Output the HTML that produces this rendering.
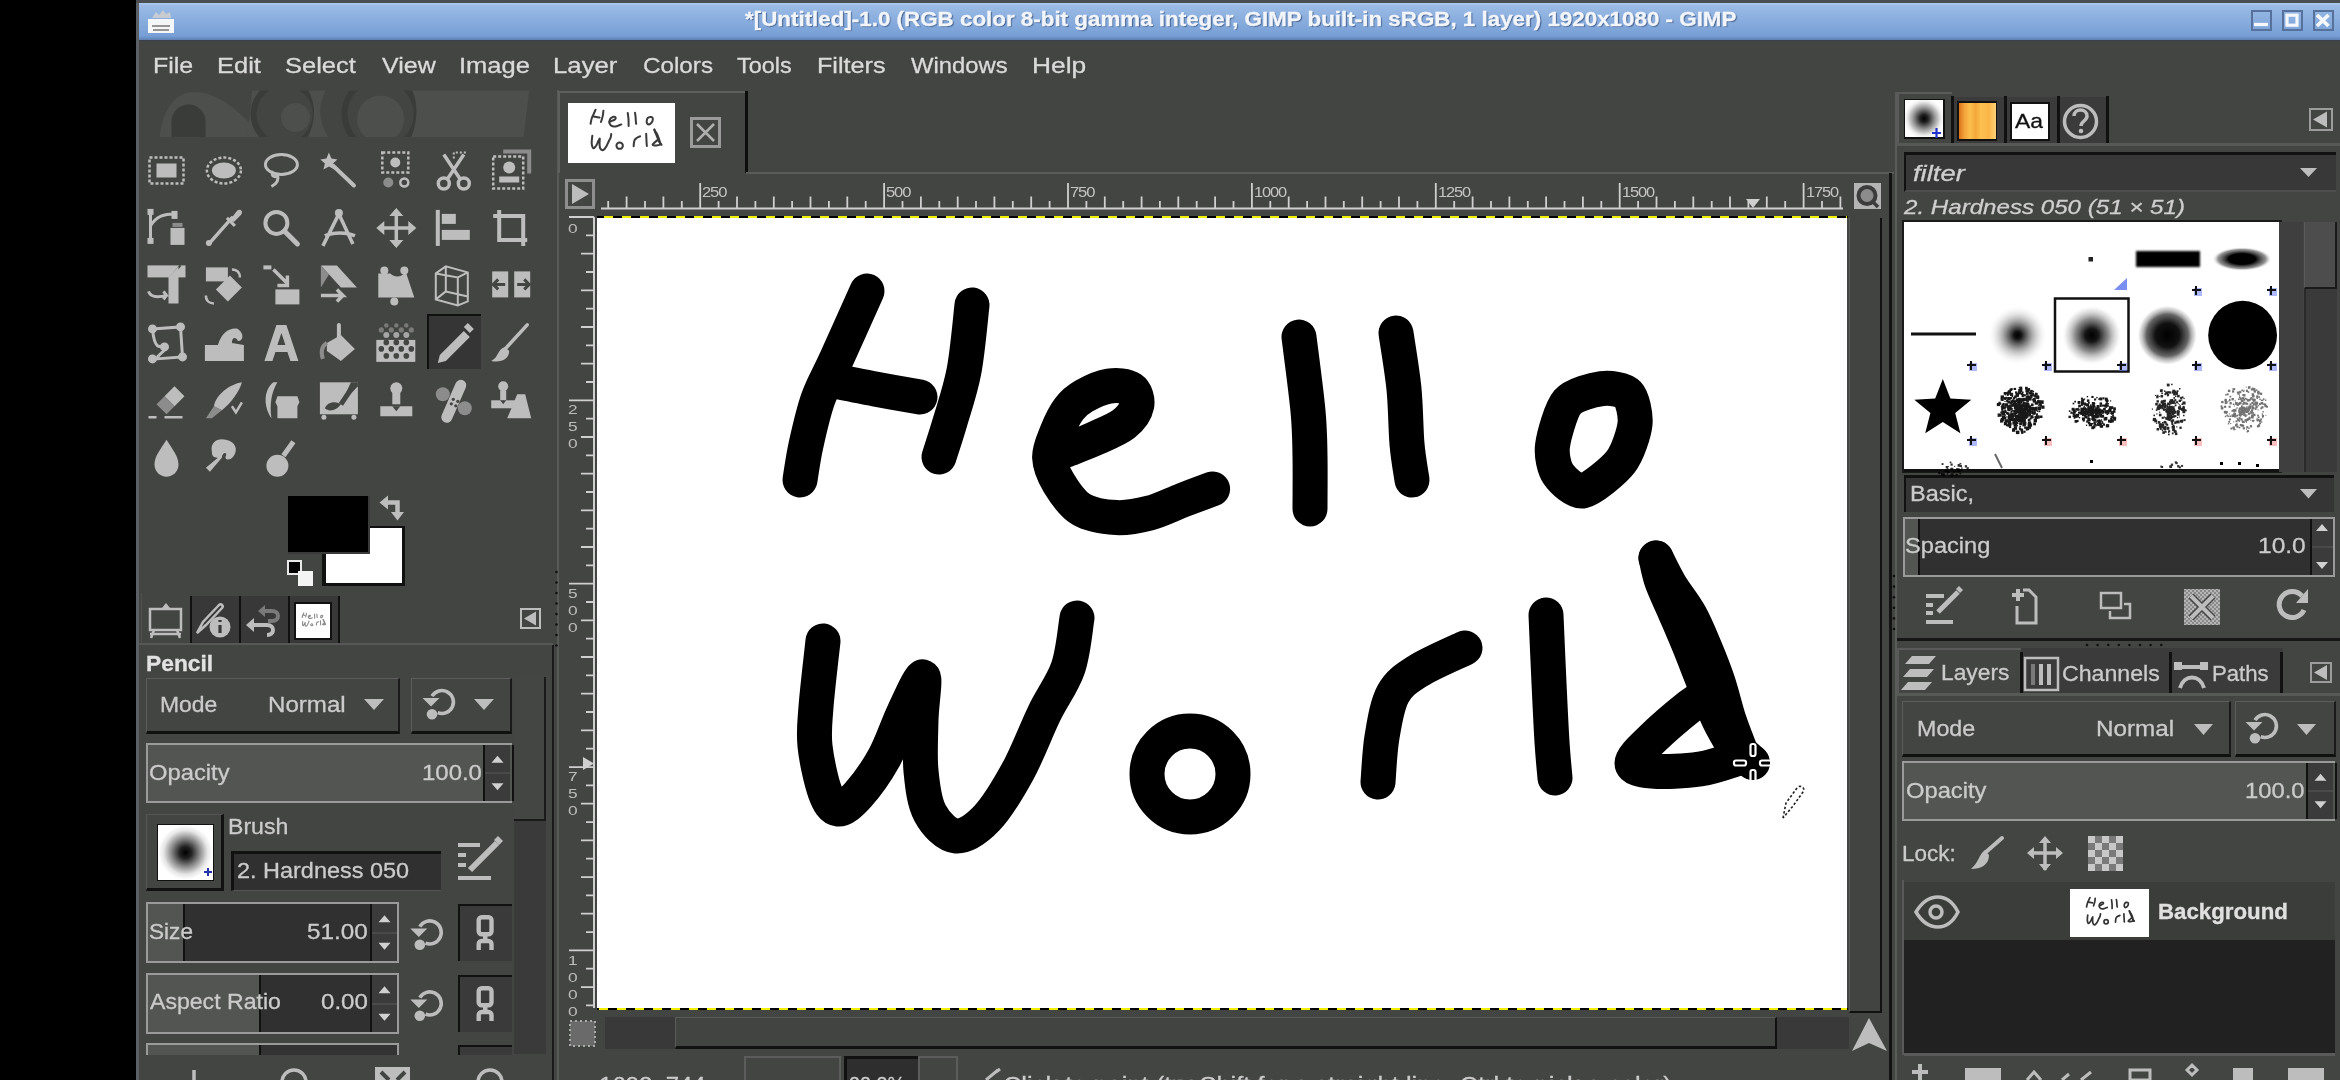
<!DOCTYPE html>
<html><head><meta charset="utf-8">
<style>
html,body{margin:0;padding:0;}
body{width:2340px;height:1080px;overflow:hidden;background:#000;position:relative;font-family:"Liberation Sans",sans-serif;}
.a{position:absolute;}
.t{position:absolute;white-space:nowrap;line-height:1;transform-origin:0 0;-webkit-text-stroke:0.3px currentColor;}
svg{position:absolute;left:0;top:0;}
</style></head><body>
<div class="a" style="left:136px;top:0px;width:2204px;height:1080px;background:#434542;"></div>
<div class="a" style="left:136px;top:0px;width:3px;height:1080px;background:#5b6066;"></div>
<div class="a" style="left:136px;top:0px;width:2204px;height:3px;background:#4b4e51;"></div>
<div class="a" style="left:139px;top:3px;width:2201px;height:37px;background:linear-gradient(#b3cdf2 0px,#9dbce6 2px,#8fb2e0 12px,#7fa5d9 26px,#779fd6 33px,#5f7fb0 37px);"></div>
<div class="a" style="left:139px;top:40px;width:2201px;height:1px;background:#3b4149;"></div>
<div class="a" style="left:148px;top:19px;width:26px;height:14px;background:#f4f6f8;"></div>
<div class="a" style="left:2251px;top:9.5px;width:21px;height:21px;background:transparent;border:2.5px solid #56719b;box-sizing:border-box;"></div>
<div class="a" style="left:2282px;top:9.5px;width:21px;height:21px;background:transparent;border:2.5px solid #56719b;box-sizing:border-box;"></div>
<div class="a" style="left:2313px;top:9.5px;width:21px;height:21px;background:transparent;border:2.5px solid #56719b;box-sizing:border-box;"></div>
<div class="a" style="left:427px;top:314px;width:54px;height:55px;background:#353535;border-left:2px solid #111;border-top:2px solid #111;box-sizing:border-box;"></div>
<div class="a" style="left:322px;top:526px;width:83px;height:60px;background:#111;"></div>
<div class="a" style="left:326px;top:528px;width:76px;height:55px;background:#ffffff;"></div>
<div class="a" style="left:288px;top:496px;width:82px;height:58px;background:#3a3a3a;"></div>
<div class="a" style="left:288px;top:496px;width:80px;height:56px;background:#000;"></div>
<div class="a" style="left:287px;top:560px;width:15px;height:15px;background:#e8e8e8;"></div>
<div class="a" style="left:289px;top:562px;width:11px;height:11px;background:#000;"></div>
<div class="a" style="left:298px;top:571px;width:15px;height:15px;background:#f4f4f4;"></div>
<div class="a" style="left:141px;top:593px;width:1px;height:50px;background:#505050;"></div>
<div class="a" style="left:190px;top:596px;width:49px;height:47px;background:#383838;border-left:2px solid #111;box-sizing:border-box;"></div>
<div class="a" style="left:239px;top:596px;width:49px;height:47px;background:#383838;border-left:2px solid #111;box-sizing:border-box;"></div>
<div class="a" style="left:288px;top:596px;width:52px;height:47px;background:#383838;border-left:2px solid #111;border-right:2px solid #111;box-sizing:border-box;"></div>
<div class="a" style="left:139px;top:643px;width:414px;height:2px;background:#575757;"></div>
<div class="a" style="left:294px;top:602px;width:38px;height:38px;background:#111;"></div>
<div class="a" style="left:296px;top:604px;width:34px;height:34px;background:#fff;"></div>
<div class="a" style="left:520px;top:608px;width:21px;height:21px;background:transparent;border:2px solid #bdbdbd;box-sizing:border-box;"></div>
<div class="a" style="left:552px;top:645px;width:2px;height:435px;background:#1a1a1a;"></div>
<div class="a" style="left:557px;top:90px;width:2px;height:990px;background:#585a58;"></div>
<div class="a" style="left:146px;top:678px;width:254px;height:56px;background:#434542;border-top:1px solid #5c5c5c;border-left:1px solid #5c5c5c;border-bottom:3px solid #111;border-right:2px solid #1a1a1a;box-sizing:border-box;"></div>
<div class="a" style="left:411px;top:678px;width:101px;height:56px;background:#434542;border-top:1px solid #5c5c5c;border-left:1px solid #5c5c5c;border-bottom:3px solid #111;border-right:2px solid #1a1a1a;box-sizing:border-box;"></div>
<div class="a" style="left:514px;top:677px;width:32px;height:377px;background:#393a39;"></div>
<div class="a" style="left:514px;top:677px;width:32px;height:144px;background:#444644;border-right:2px solid #1a1a1a;border-bottom:2px solid #1a1a1a;box-sizing:border-box;"></div>
<div class="a" style="left:146px;top:743px;width:366px;height:60px;background:#9a9a9a;"></div>
<div class="a" style="left:148px;top:745px;width:362px;height:56px;background:#303030;"></div>
<div class="a" style="left:148px;top:745px;width:364px;height:56px;background:#525551;"></div>
<div class="a" style="left:512px;top:745px;width:2px;height:56px;background:#111;"></div>
<div class="a" style="left:483px;top:745px;width:2px;height:56px;background:#111;"></div>
<div class="a" style="left:485px;top:745px;width:25px;height:56px;background:#3a3b3a;"></div>
<div class="a" style="left:485px;top:772.0px;width:25px;height:2px;background:#4a4a4a;"></div>
<div class="a" style="left:146px;top:814px;width:78px;height:77px;background:#434542;border-top:1px solid #555;border-left:1px solid #555;border-bottom:3px solid #111;border-right:3px solid #111;box-sizing:border-box;"></div>
<div class="a" style="left:157px;top:824px;width:57px;height:57px;background:#111;"></div>
<div class="a" style="left:158px;top:825px;width:55px;height:55px;background:radial-gradient(circle at 50% 50%, #000 0px, #222 6px, #888 14px, #e6e6e6 22px, #fff 27px);"></div>
<div class="a" style="left:231px;top:851px;width:210px;height:40px;background:#303030;border-top:3px solid #111;border-left:3px solid #111;border-bottom:1px solid #555;box-sizing:border-box;"></div>
<div class="a" style="left:146px;top:902px;width:253px;height:61px;background:#9a9a9a;"></div>
<div class="a" style="left:148px;top:904px;width:249px;height:57px;background:#303030;"></div>
<div class="a" style="left:148px;top:904px;width:35px;height:57px;background:#525551;"></div>
<div class="a" style="left:183px;top:904px;width:2px;height:57px;background:#111;"></div>
<div class="a" style="left:370px;top:904px;width:2px;height:57px;background:#111;"></div>
<div class="a" style="left:372px;top:904px;width:25px;height:57px;background:#3a3b3a;"></div>
<div class="a" style="left:372px;top:931.5px;width:25px;height:2px;background:#4a4a4a;"></div>
<div class="a" style="left:146px;top:973px;width:253px;height:61px;background:#9a9a9a;"></div>
<div class="a" style="left:148px;top:975px;width:249px;height:57px;background:#303030;"></div>
<div class="a" style="left:148px;top:975px;width:111px;height:57px;background:#525551;"></div>
<div class="a" style="left:259px;top:975px;width:2px;height:57px;background:#111;"></div>
<div class="a" style="left:370px;top:975px;width:2px;height:57px;background:#111;"></div>
<div class="a" style="left:372px;top:975px;width:25px;height:57px;background:#3a3b3a;"></div>
<div class="a" style="left:372px;top:1002.5px;width:25px;height:2px;background:#4a4a4a;"></div>
<div class="a" style="left:146px;top:1043px;width:253px;height:12px;background:#9a9a9a;"></div>
<div class="a" style="left:148px;top:1045px;width:249px;height:10px;background:#333;"></div>
<div class="a" style="left:148px;top:1045px;width:111px;height:10px;background:#525551;"></div>
<div class="a" style="left:259px;top:1045px;width:2px;height:10px;background:#111;"></div>
<div class="a" style="left:139px;top:1055px;width:413px;height:25px;background:#434542;"></div>
<div class="a" style="left:458px;top:904px;width:54px;height:57px;background:#3a3a3a;border-top:2px solid #111;border-left:2px solid #111;box-sizing:border-box;"></div>
<div class="a" style="left:458px;top:975px;width:54px;height:57px;background:#3a3a3a;border-top:2px solid #111;border-left:2px solid #111;box-sizing:border-box;"></div>
<div class="a" style="left:458px;top:1045px;width:54px;height:10px;background:#3a3a3a;border-top:2px solid #111;border-left:2px solid #111;box-sizing:border-box;"></div>
<div class="a" style="left:558px;top:91px;width:188px;height:82px;background:#434542;border-top:2px solid #5e605e;border-left:2px solid #5e605e;box-sizing:border-box;"></div>
<div class="a" style="left:745px;top:91px;width:3px;height:82px;background:#0d0d0d;"></div>
<div class="a" style="left:746px;top:172px;width:1148px;height:2px;background:#5a5c5a;"></div>
<div class="a" style="left:568px;top:103px;width:107px;height:60px;background:#ffffff;"></div>
<div class="a" style="left:690px;top:117px;width:31px;height:31px;background:transparent;border:3px solid #9a9a9a;box-sizing:border-box;"></div>
<div class="a" style="left:565px;top:179px;width:30px;height:30px;background:transparent;border:3px solid #8e8e8e;box-sizing:border-box;"></div>
<div class="a" style="left:597px;top:216px;width:1251px;height:2px;background:#000;"></div>
<div class="a" style="left:597px;top:1008px;width:1251px;height:2px;background:#000;"></div>
<div class="a" style="left:597px;top:218px;width:1250px;height:790px;background:#ffffff;"></div>
<div class="a" style="left:1849px;top:218px;width:33px;height:795px;background:#424441;border-right:2px solid #111;border-bottom:2px solid #111;border-left:1px solid #5a5a5a;box-sizing:border-box;"></div>
<div class="a" style="left:1854px;top:183px;width:27px;height:26px;background:#b4b4b4;"></div>
<div class="a" style="left:605px;top:1017px;width:70px;height:32px;background:#393939;"></div>
<div class="a" style="left:675px;top:1017px;width:1102px;height:32px;background:#424441;border-top:1px solid #5a5a5a;border-left:1px solid #5a5a5a;border-bottom:3px solid #111;border-right:2px solid #111;box-sizing:border-box;"></div>
<div class="a" style="left:1777px;top:1017px;width:72px;height:32px;background:#393939;"></div>
<div class="a" style="left:1889px;top:173px;width:3px;height:907px;background:#121212;"></div>
<div class="a" style="left:1895px;top:92px;width:2px;height:988px;background:#5a5c5a;"></div>
<div class="a" style="left:813px;top:1074px;width:14px;height:4px;background:#bdbdbd;"></div>
<div class="a" style="left:844px;top:1056px;width:75px;height:30px;background:#2e2e2e;border-top:3px solid #111;border-left:3px solid #111;box-sizing:border-box;"></div>
<div class="a" style="left:1951px;top:97px;width:156px;height:47px;background:#3a3b3a;"></div>
<div class="a" style="left:1897px;top:92px;width:55px;height:52px;background:#434542;border-top:2px solid #5a5a5a;border-left:2px solid #5a5a5a;box-sizing:border-box;"></div>
<div class="a" style="left:1951px;top:96px;width:3px;height:48px;background:#111;"></div>
<div class="a" style="left:2004px;top:96px;width:3px;height:48px;background:#111;"></div>
<div class="a" style="left:2057px;top:96px;width:3px;height:48px;background:#111;"></div>
<div class="a" style="left:2106px;top:96px;width:3px;height:48px;background:#111;"></div>
<div class="a" style="left:1897px;top:143px;width:443px;height:3px;background:#575957;"></div>
<div class="a" style="left:1904px;top:99px;width:41px;height:40px;background:#111;"></div>
<div class="a" style="left:1905px;top:100px;width:38px;height:37px;background:radial-gradient(circle at 50% 50%, #000 0px, #222 4px, #999 11px, #eee 17px, #fff 20px);"></div>
<div class="a" style="left:1957px;top:101px;width:40px;height:40px;background:#111;"></div>
<div class="a" style="left:1959px;top:103px;width:37px;height:36px;background:linear-gradient(90deg,#d9731a 0%,#f3a53c 15%,#fbbf4b 30%,#f4a738 45%,#fcc253 60%,#f9b546 80%,#fdd27a 100%);"></div>
<div class="a" style="left:2010px;top:102px;width:40px;height:39px;background:#111;"></div>
<div class="a" style="left:2012px;top:104px;width:36px;height:35px;background:#fff;"></div>
<div class="a" style="left:2309px;top:108px;width:24px;height:23px;background:transparent;border:2px solid #9c9c9c;box-sizing:border-box;"></div>
<div class="a" style="left:1904px;top:152px;width:432px;height:40px;background:#383838;border-top:3px solid #111;border-left:2px solid #111;border-bottom:2px solid #4d4d4d;box-sizing:border-box;"></div>
<div class="a" style="left:1902px;top:220px;width:380px;height:253px;background:#1a1a1a;"></div>
<div class="a" style="left:1904px;top:222px;width:375px;height:247px;background:#ffffff;"></div>
<div class="a" style="left:1904px;top:469px;width:378px;height:3px;background:#111;"></div>
<div class="a" style="left:2279px;top:222px;width:24px;height:250px;background:#3e3f3e;"></div>
<div class="a" style="left:2304px;top:222px;width:33px;height:250px;background:#3a3a3a;border-left:2px solid #2a2a2a;box-sizing:border-box;"></div>
<div class="a" style="left:2304px;top:222px;width:33px;height:67px;background:#4c4d4c;border-right:2px solid #1a1a1a;border-bottom:2px solid #1a1a1a;border-left:1px solid #5a5a5a;box-sizing:border-box;"></div>
<div class="a" style="left:1904px;top:475px;width:430px;height:37px;background:#353535;border-top:3px solid #111;border-left:2px solid #111;box-sizing:border-box;"></div>
<div class="a" style="left:1903px;top:517px;width:432px;height:60px;background:#9a9a9a;"></div>
<div class="a" style="left:1905px;top:519px;width:428px;height:56px;background:#303030;"></div>
<div class="a" style="left:1905px;top:519px;width:13px;height:56px;background:#525551;"></div>
<div class="a" style="left:1918px;top:519px;width:2px;height:56px;background:#111;"></div>
<div class="a" style="left:2310px;top:519px;width:2px;height:56px;background:#111;"></div>
<div class="a" style="left:2312px;top:519px;width:21px;height:56px;background:#3a3b3a;"></div>
<div class="a" style="left:2312px;top:546px;width:21px;height:2px;background:#4a4a4a;"></div>
<div class="a" style="left:1897px;top:638px;width:443px;height:3px;background:#161616;"></div>
<div class="a" style="left:1897px;top:648px;width:443px;height:46px;background:#3a3b3a;"></div>
<div class="a" style="left:1897px;top:648px;width:124px;height:46px;background:#434542;border-top:2px solid #5a5a5a;border-left:2px solid #5a5a5a;box-sizing:border-box;"></div>
<div class="a" style="left:2020px;top:652px;width:3px;height:42px;background:#111;"></div>
<div class="a" style="left:2169px;top:652px;width:3px;height:42px;background:#111;"></div>
<div class="a" style="left:2280px;top:652px;width:3px;height:42px;background:#111;"></div>
<div class="a" style="left:2283px;top:648px;width:57px;height:46px;background:#434542;"></div>
<div class="a" style="left:1897px;top:693px;width:443px;height:3px;background:#575957;"></div>
<div class="a" style="left:2310px;top:662px;width:22px;height:21px;background:transparent;border:2px solid #9c9c9c;box-sizing:border-box;"></div>
<div class="a" style="left:1902px;top:701px;width:329px;height:56px;background:#434542;border-top:1px solid #5c5c5c;border-left:1px solid #5c5c5c;border-bottom:3px solid #111;border-right:2px solid #1a1a1a;box-sizing:border-box;"></div>
<div class="a" style="left:2235px;top:701px;width:101px;height:56px;background:#434542;border-top:1px solid #5c5c5c;border-left:1px solid #5c5c5c;border-bottom:3px solid #111;border-right:2px solid #1a1a1a;box-sizing:border-box;"></div>
<div class="a" style="left:1902px;top:761px;width:433px;height:60px;background:#9a9a9a;"></div>
<div class="a" style="left:1904px;top:763px;width:429px;height:56px;background:#303030;"></div>
<div class="a" style="left:1904px;top:763px;width:431px;height:56px;background:#525551;"></div>
<div class="a" style="left:2335px;top:763px;width:2px;height:56px;background:#111;"></div>
<div class="a" style="left:2306px;top:763px;width:2px;height:56px;background:#111;"></div>
<div class="a" style="left:2308px;top:763px;width:25px;height:56px;background:#3a3b3a;"></div>
<div class="a" style="left:2308px;top:790.0px;width:25px;height:2px;background:#4a4a4a;"></div>
<div class="a" style="left:1904px;top:882px;width:431px;height:171px;background:#212121;"></div>
<div class="a" style="left:1904px;top:882px;width:431px;height:58px;background:#3b3d3a;"></div>
<div class="a" style="left:1902px;top:880px;width:2px;height:175px;background:#5a5a5a;"></div>
<div class="a" style="left:2070px;top:889px;width:79px;height:48px;background:#ffffff;"></div>
<div class="a" style="left:1904px;top:1053px;width:431px;height:3px;background:#5a5a5a;"></div>
<svg width="2340" height="1080" viewBox="0 0 2340 1080"><path d="M152,18 l4,-6 l3,3 l4,-5 l3,4 l4,-2 l1,6 Z" fill="#c8ccd2"/>
<path d="M152,26 h18 M153,30 h16" stroke="#777" stroke-width="1.5"/>
<path d="M2254,24.5 h14" stroke="#f4f7fc" stroke-width="3.3"/>
<rect x="2287" y="15.2" width="10" height="10" fill="none" stroke="#f4f7fc" stroke-width="3.2"/>
<path d="M2317,15 l11.5,11 M2328.5,15 l-11.5,11" stroke="#f4f7fc" stroke-width="3.8"/>
<defs><clipPath id="wclip"><rect x="150" y="90.5" width="390" height="46.5"/></clipPath></defs><g clip-path="url(#wclip)"><path d="M159.6,137 C162,112 174,93 192,92 C214,91 236,106 262.8,137 Z" fill="#4d4f4c"/><circle cx="188.5" cy="121.5" r="17" fill="#3a3c39"/><rect x="171.5" y="121.5" width="34" height="16" fill="#3a3c39"/><path d="M252,90 L261,90 C255,106 254,122 262.8,137 L246.5,137 C250,120 251,104 252,90 Z" fill="#4d4f4c"/><circle cx="284.6" cy="114" r="31" fill="none" stroke="#3a3c39" stroke-width="6"/><circle cx="295.4" cy="117.6" r="14.5" fill="#4d4f4c"/><path d="M308,90 L326.3,90 C318,104 318,120 328,137 L308,137 C316,120 316,104 308,90 Z" fill="#4d4f4c"/><circle cx="380.6" cy="114" r="36" fill="none" stroke="#3a3c39" stroke-width="6"/><circle cx="380.6" cy="119" r="23.6" fill="#4d4f4c"/><path d="M412.3,90 L529.2,90 L523.7,137 L411.4,137 C418,120 418,104 412.3,90 Z" fill="#4d4f4c"/></g>
<g transform="translate(146.5,150.5)"><rect x="3" y="7" width="34" height="26" fill="none" stroke="#bdbdbd" stroke-width="2.5" stroke-dasharray="3,2"/><rect x="10" y="13" width="20" height="14" fill="#bdbdbd"/></g>
<g transform="translate(203.9,150.5)"><ellipse cx="20" cy="20" rx="17" ry="13" fill="none" stroke="#bdbdbd" stroke-width="2.5" stroke-dasharray="3,2"/><ellipse cx="20" cy="20" rx="12" ry="8" fill="#bdbdbd"/></g>
<g transform="translate(261.4,150.5)"><ellipse cx="20" cy="14" rx="16" ry="10" fill="none" stroke="#bdbdbd" stroke-width="3"/><path d="M12,21 C8,26 16,28 16,24 C18,30 14,34 10,36" fill="none" stroke="#bdbdbd" stroke-width="3"/></g>
<g transform="translate(318.9,150.5)"><path d="M10,2 l2.5,6 6,1 -4.5,4 1.5,6 -5.5,-3 -5.5,3 1.5,-6 -4.5,-4 6,-1 Z" fill="#bdbdbd"/><path d="M14,15 L35,35" stroke="#bdbdbd" stroke-width="4" stroke-linecap="round"/></g>
<g transform="translate(376.3,150.5)"><rect x="6" y="2" width="26" height="20" fill="none" stroke="#bdbdbd" stroke-width="2.5" stroke-dasharray="3,2"/><circle cx="19" cy="12" r="5" fill="#bdbdbd"/><circle cx="12" cy="32" r="5" fill="#8c8c8c"/><circle cx="28" cy="32" r="4" fill="none" stroke="#bdbdbd" stroke-width="2.5"/></g>
<g transform="translate(433.8,150.5)"><path d="M10,4 L26,28 M30,4 L14,28" stroke="#bdbdbd" stroke-width="3.5"/><circle cx="10" cy="33" r="5.5" fill="none" stroke="#bdbdbd" stroke-width="3.5"/><circle cx="30" cy="33" r="5.5" fill="none" stroke="#bdbdbd" stroke-width="3.5"/><path d="M20,2 v8 M22,2 h12" stroke="#bdbdbd" stroke-width="2" stroke-dasharray="2,2"/></g>
<g transform="translate(491.2,150.5)"><path d="M12,1 h26 v22" fill="none" stroke="#8c8c8c" stroke-width="4"/><rect x="2" y="6" width="30" height="32" fill="none" stroke="#bdbdbd" stroke-width="2.5" stroke-dasharray="3,2"/><circle cx="18" cy="17" r="6" fill="#bdbdbd"/><path d="M8,32 v-6 h20 v6 Z" fill="#bdbdbd"/></g>
<g transform="translate(146.5,207.9)"><path d="M4,4 v30 M4,18 C10,8 18,6 28,6" fill="none" stroke="#bdbdbd" stroke-width="3"/><rect x="1" y="1" width="6" height="6" fill="#bdbdbd"/><rect x="1" y="30" width="6" height="6" fill="#bdbdbd"/><rect x="25" y="3" width="6" height="8" fill="#bdbdbd"/><rect x="24" y="20" width="14" height="17" fill="#bdbdbd"/><rect x="26" y="15" width="10" height="4" fill="#8c8c8c"/></g>
<g transform="translate(203.9,207.9)"><path d="M5,36 L28,10" stroke="#bdbdbd" stroke-width="3.5" stroke-linecap="round"/><path d="M26,12 L33,3 C36,0 40,3 37,7 L30,14 Z" fill="#bdbdbd"/><path d="M23,10 L31,18" stroke="#bdbdbd" stroke-width="3"/><circle cx="5" cy="35" r="3" fill="#bdbdbd"/></g>
<g transform="translate(261.4,207.9)"><circle cx="15" cy="15" r="11" fill="none" stroke="#bdbdbd" stroke-width="4"/><path d="M23,23 L36,36" stroke="#bdbdbd" stroke-width="5" stroke-linecap="round"/></g>
<g transform="translate(318.9,207.9)"><circle cx="20" cy="5" r="4" fill="#bdbdbd"/><path d="M20,6 L4,38 M20,6 L34,36 M6,28 C14,24 28,24 36,28" fill="none" stroke="#bdbdbd" stroke-width="3.5"/></g>
<g transform="translate(376.3,207.9)"><path d="M20,2 v36 M2,20 h36" stroke="#bdbdbd" stroke-width="3.5"/><path d="M20,0 l-7,8 h14 Z M20,40 l-7,-8 h14 Z M0,20 l8,-7 v14 Z M40,20 l-8,-7 v14 Z" fill="#bdbdbd"/></g>
<g transform="translate(433.8,207.9)"><rect x="2" y="2" width="4" height="36" fill="#bdbdbd"/><rect x="8" y="6" width="14" height="10" fill="#bdbdbd"/><rect x="8" y="22" width="28" height="10" fill="#bdbdbd"/></g>
<g transform="translate(491.2,207.9)"><path d="M8,2 v30 h28 M2,8 h30 v30" fill="none" stroke="#bdbdbd" stroke-width="4"/></g>
<g transform="translate(146.5,265.4)"><rect x="1" y="0" width="38" height="12" fill="#bdbdbd"/><path d="M24,12 L34,0" stroke="#434542" stroke-width="2"/><path d="M22,12 L32,1 L32,38 L22,38 Z" fill="#bdbdbd"/><path d="M2,26 C4,32 12,32 20,30 l-3,-4 M20,30 l-3,4" fill="none" stroke="#bdbdbd" stroke-width="3"/></g>
<g transform="translate(203.9,265.4)"><rect x="2" y="2" width="22" height="14" fill="#bdbdbd"/><path d="M12,24 L26,10 L38,22 L24,36 Z" fill="#bdbdbd"/><path d="M28,4 C34,4 36,8 36,12 M2,30 C2,36 6,38 10,38" fill="none" stroke="#bdbdbd" stroke-width="2.5"/></g>
<g transform="translate(261.4,265.4)"><rect x="2" y="0" width="8" height="4" fill="#bdbdbd"/><path d="M12,4 L26,18 M26,10 v10 h-10" fill="none" stroke="#bdbdbd" stroke-width="3.5"/><rect x="14" y="24" width="24" height="15" fill="#bdbdbd"/></g>
<g transform="translate(318.9,265.4)"><path d="M2,0 L18,0 L38,22 L22,22 Z" fill="#bdbdbd"/><path d="M2,0 L10,9 L2,22 Z" fill="#8c8c8c"/><path d="M2,30 h22 l-6,-6 M24,30 l-6,6" fill="none" stroke="#bdbdbd" stroke-width="3.5"/></g>
<g transform="translate(376.3,265.4)"><path d="M2,8 L14,8 C18,12 24,12 28,8 L30,8 L38,32 L2,32 Z" fill="#bdbdbd"/><circle cx="8" cy="5" r="4" fill="#bdbdbd"/><circle cx="28" cy="5" r="4" fill="#bdbdbd"/><circle cx="18" cy="36" r="4" fill="#bdbdbd"/></g>
<g transform="translate(433.8,265.4)"><path d="M2,8 L12,1 L34,7 L34,36 L24,40 L2,34 Z M2,8 L24,12 L34,7 M24,12 L24,40 M12,1 L12,26 L2,34 M12,26 L34,31" fill="none" stroke="#bdbdbd" stroke-width="2"/></g>
<g transform="translate(491.2,265.4)"><rect x="1" y="6" width="16" height="26" fill="#bdbdbd"/><rect x="23" y="6" width="16" height="26" fill="#bdbdbd"/><path d="M4,19 h10 M7,14 l-5,5 5,5 M26,19 h10 M33,14 l5,5 -5,5" fill="none" stroke="#434542" stroke-width="3"/></g>
<g transform="translate(146.5,322.9)"><path d="M6,6 L34,4 L36,34 L10,36 C14,28 20,30 18,22 C14,24 8,28 6,6 Z" fill="none" stroke="#bdbdbd" stroke-width="3"/><circle cx="6" cy="6" r="4.5" fill="#bdbdbd"/><circle cx="34" cy="4" r="4.5" fill="#bdbdbd"/><circle cx="36" cy="34" r="4.5" fill="#bdbdbd"/><circle cx="6" cy="36" r="4.5" fill="#bdbdbd"/><circle cx="18" cy="24" r="4.5" fill="#bdbdbd"/></g>
<g transform="translate(203.9,322.9)"><path d="M1,38 L1,22 L14,22 C18,8 28,4 34,6 C40,10 40,18 34,18 C32,14 28,14 28,20 L40,22 L40,38 Z" fill="#bdbdbd"/></g>
<g transform="translate(261.4,322.9)"><path d="M3,38 L15,2 L25,2 L37,38 L29,38 L26,29 L14,29 L11,38 Z M16,22 L24,22 L20,10 Z" fill="#bdbdbd" fill-rule="evenodd"/></g>
<g transform="translate(318.9,322.9)"><path d="M8,20 L22,12 L36,26 L22,38 L8,28 Z" fill="#bdbdbd"/><path d="M20,2 v20" stroke="#bdbdbd" stroke-width="4" stroke-linecap="round"/><path d="M8,20 C2,24 2,30 4,36" stroke="#8c8c8c" stroke-width="4" fill="none"/></g>
<g transform="translate(376.3,322.9)"><rect x="0" y="17" width="39" height="22" fill="#bdbdbd"/><g fill="#bdbdbd" opacity="0.45"><circle cx="5" cy="7" r="2.6"/><circle cx="15" cy="7" r="2.6"/><circle cx="25" cy="7" r="2.6"/><circle cx="35" cy="7" r="2.6"/><circle cx="10" cy="2.5" r="2.2"/><circle cx="20" cy="2.5" r="2.2"/><circle cx="30" cy="2.5" r="2.2"/></g><g fill="#bdbdbd" opacity="0.8"><circle cx="10" cy="12" r="3"/><circle cx="20" cy="12" r="3"/><circle cx="30" cy="12" r="3"/></g><g fill="#434542"><circle cx="10" cy="19.5" r="2.8"/><circle cx="20" cy="19.5" r="2.8"/><circle cx="30" cy="19.5" r="2.8"/><circle cx="5" cy="26" r="2.8"/><circle cx="15" cy="26" r="2.8"/><circle cx="25" cy="26" r="2.8"/><circle cx="35" cy="26" r="2.8"/><circle cx="10" cy="33" r="2.8"/><circle cx="20" cy="33" r="2.8"/><circle cx="30" cy="33" r="2.8"/></g></g>
<g transform="translate(433.8,322.9)"><path d="M6,32 L30,8 L36,14 L12,38 L4,40 Z" fill="#bdbdbd"/><path d="M30,4 L34,0 L40,6 L36,10 Z" fill="#bdbdbd"/></g>
<g transform="translate(491.2,322.9)"><path d="M14,26 L36,2" stroke="#bdbdbd" stroke-width="3.5" stroke-linecap="round"/><path d="M14,24 C6,26 8,34 0,38 C10,40 18,36 18,28 Z" fill="#bdbdbd"/></g>
<g transform="translate(146.5,380.3)"><path d="M18,16 L28,6 L38,16 L28,26 Z" fill="#bdbdbd"/><path d="M10,24 L18,16 L28,26 L20,34 Z" fill="#8c8c8c"/><path d="M2,37 h8 M18,37 h18" stroke="#bdbdbd" stroke-width="2.5"/></g>
<g transform="translate(203.9,380.3)"><path d="M38,2 C26,4 12,14 10,26 L18,30 C28,22 36,10 38,2 Z" fill="#bdbdbd"/><path d="M10,26 L2,38 L8,38 L18,30 Z" fill="#8c8c8c"/><path d="M28,26 l4,6 6,-10" fill="none" stroke="#bdbdbd" stroke-width="2.5"/></g>
<g transform="translate(261.4,380.3)"><path d="M12,2 C2,10 2,26 10,38 C8,24 10,12 16,2 Z" fill="#bdbdbd"/><path d="M16,16 h20 l2,6 -2,4 v12 h-20 v-12 l-2,-4 Z" fill="#bdbdbd"/></g>
<g transform="translate(318.9,380.3)"><rect x="1" y="2" width="38" height="32" fill="#bdbdbd"/><path d="M32,2 L39,2 L39,6 L22,24 Z" fill="#434542"/><path d="M6,28 C8,22 16,20 22,24 C18,30 10,32 6,28 Z" fill="#434542"/><path d="M22,24 L34,6" stroke="#434542" stroke-width="5" fill="none"/><circle cx="5" cy="37" r="2.5" fill="#bdbdbd"/><circle cx="35" cy="37" r="2.5" fill="#bdbdbd"/></g>
<g transform="translate(376.3,380.3)"><circle cx="20" cy="8" r="6" fill="#bdbdbd"/><rect x="16" y="12" width="8" height="12" fill="#bdbdbd"/><path d="M4,26 h32 v10 h-32 Z" fill="#bdbdbd"/><path d="M16,26 h8 l-4,5 Z" fill="#434542"/></g>
<g transform="translate(433.8,380.3)"><circle cx="9" cy="14" r="7" fill="#8c8c8c"/><circle cx="31" cy="28" r="7" fill="#8c8c8c"/><path d="M13,37 L27,5" stroke="#bdbdbd" stroke-width="11" stroke-linecap="round"/><g fill="#434542"><circle cx="19.5" cy="19" r="1.6"/><circle cx="24" cy="21" r="1.6"/><circle cx="17.5" cy="23.5" r="1.6"/><circle cx="22" cy="25.5" r="1.6"/></g></g>
<g transform="translate(491.2,380.3)"><circle cx="12" cy="6" r="5" fill="#bdbdbd"/><rect x="9" y="10" width="6" height="10" fill="#bdbdbd"/><path d="M0,20 h24 v8 h-24 Z" fill="#bdbdbd"/><path d="M16,38 L26,14 h8 L40,38 Z" fill="#bdbdbd"/><path d="M9,20 h6 l-3,4 Z" fill="#434542"/></g>
<g transform="translate(146.5,437.8)"><path d="M20,2 C26,12 32,18 32,27 C32,34 26,39 20,39 C14,39 8,34 8,27 C8,18 14,12 20,2 Z" fill="#bdbdbd"/></g>
<g transform="translate(203.9,437.8)"><path d="M12,18 C4,14 6,2 18,2 C30,2 34,8 32,16 C30,22 24,24 20,22 L8,36" fill="none" stroke="#bdbdbd" stroke-width="0"/><path d="M8,14 C6,4 14,0 22,2 C32,4 34,12 30,18 C26,24 20,22 22,18 C24,14 18,14 18,20 L6,34 L2,30 L14,20 C8,20 8,16 8,14 Z" fill="#bdbdbd"/></g>
<g transform="translate(261.4,437.8)"><circle cx="16" cy="28" r="11" fill="#bdbdbd"/><path d="M22,18 L32,4" stroke="#bdbdbd" stroke-width="5"/></g>
<path d="M386,502.5 H397.5 V513" fill="none" stroke="#bdbdbd" stroke-width="4.5"/><path d="M379.5,502.5 L388,495.5 V509.5 Z M391,512 H404 L397.5,520.5 Z" fill="#bdbdbd"/>
<g fill="none" stroke="#bdbdbd" stroke-width="2.5"><rect x="150" y="609" width="31" height="21"/><path d="M154,630 l-3,8 M177,630 l3,8 M150,634 h31"/></g><path d="M162,608 l4,-5 4,5 Z" fill="#bdbdbd"/>
<path d="M197,633 L203,622 L219,605 C221,603 224,606 222,608 L206,625 Z" fill="none" stroke="#bdbdbd" stroke-width="2.5"/><circle cx="220" cy="627" r="10.5" fill="#bdbdbd"/><path d="M220,620 v2 M220,625 v8" stroke="#383838" stroke-width="3.2"/>
<path d="M249,625 h18 c8,0 8,10 0,10" fill="none" stroke="#bdbdbd" stroke-width="4"/><path d="M246,625 l8,-7 v14 Z" fill="#bdbdbd"/><path d="M262,611 h10 c8,0 8,10 0,10 h-4" fill="none" stroke="#7a7a7a" stroke-width="4"/><path d="M258,611 l7,-6 v12 Z" fill="#7a7a7a"/>
<g transform="translate(282.6,605.8) scale(0.0245)"><use href="#hw" stroke="#8a8a8a" stroke-width="45"/></g>
<path d="M524,618.5 l12,-7 v14 Z" fill="#bdbdbd"/>
<g fill="#111"><circle cx="556.5" cy="572.0" r="1.3"/><circle cx="556.5" cy="582.5" r="1.3"/><circle cx="556.5" cy="593.0" r="1.3"/><circle cx="556.5" cy="603.5" r="1.3"/><circle cx="556.5" cy="614.0" r="1.3"/><circle cx="556.5" cy="624.5" r="1.3"/><circle cx="556.5" cy="635.0" r="1.3"/><circle cx="556.5" cy="645.5" r="1.3"/></g>
<path d="M364,699 h20 l-10,11 Z" fill="#bdbdbd"/>
<path d="M432.0,696.2 A11.5,11.5 0 1 1 437.7,712.7" fill="none" stroke="#bdbdbd" stroke-width="3.6"/><path d="M422.5,698.0 L439.5,698.0 L431.0,706.5 Z" fill="#bdbdbd"/><circle cx="432.0" cy="714.3" r="5.3" fill="#bdbdbd"/>
<path d="M474,699 h20 l-10,11 Z" fill="#bdbdbd"/>
<path d="M491.5,762.8 h12 l-6,-7 Z M491.5,783.2 h12 l-6,7 Z" fill="#d0d0d0"/>
<path d="M204,872 h8 M208,868 v8" stroke="#2233aa" stroke-width="2"/>
<g fill="#bdbdbd"><rect x="458" y="843" width="22" height="4"/><rect x="458" y="853" width="8" height="4"/><rect x="458" y="863" width="8" height="4"/><rect x="458" y="876" width="33" height="4"/></g><path d="M470,870 L497,843" stroke="#bdbdbd" stroke-width="6"/><path d="M494,840 l4,-4 5,5 -4,4 Z" fill="#bdbdbd"/>
<path d="M378.5,922.13 h12 l-6,-7 Z M378.5,942.87 h12 l-6,7 Z" fill="#d0d0d0"/>
<path d="M378.5,993.13 h12 l-6,-7 Z M378.5,1013.87 h12 l-6,7 Z" fill="#d0d0d0"/>
<path d="M419.8,926.6 A11.5,11.5 0 1 1 425.5,943.1" fill="none" stroke="#bdbdbd" stroke-width="3.6"/><path d="M410.3,928.4 L427.3,928.4 L418.8,936.9 Z" fill="#bdbdbd"/><circle cx="419.8" cy="944.7" r="5.3" fill="#bdbdbd"/>
<rect x="478.7" y="917.2" width="12.8" height="17" rx="3" fill="none" stroke="#bdbdbd" stroke-width="4.4"/><rect x="483.0" y="936" width="4.5" height="3" fill="#bdbdbd"/><path d="M478.7,950 v-6 a3,3 0 0 1 3,-3 h6.8 a3,3 0 0 1 3,3 v6" fill="none" stroke="#bdbdbd" stroke-width="4.4"/>
<path d="M419.8,997.6 A11.5,11.5 0 1 1 425.5,1014.1" fill="none" stroke="#bdbdbd" stroke-width="3.6"/><path d="M410.3,999.4 L427.3,999.4 L418.8,1007.9 Z" fill="#bdbdbd"/><circle cx="419.8" cy="1015.7" r="5.3" fill="#bdbdbd"/>
<rect x="478.7" y="988.2" width="12.8" height="17" rx="3" fill="none" stroke="#bdbdbd" stroke-width="4.4"/><rect x="483.0" y="1007" width="4.5" height="3" fill="#bdbdbd"/><path d="M478.7,1021 v-6 a3,3 0 0 1 3,-3 h6.8 a3,3 0 0 1 3,3 v6" fill="none" stroke="#bdbdbd" stroke-width="4.4"/>
<g fill="none" stroke="#bdbdbd" stroke-width="3.5"><path d="M194,1070 v12"/><path d="M282,1082 a12,12 0 0 1 24,0"/><path d="M478,1082 a12,12 0 0 1 24,0"/></g><rect x="375" y="1067" width="35" height="14" fill="#bdbdbd"/><path d="M381,1072 l8,8 m16,-8 l-8,8" stroke="#434542" stroke-width="4"/>
<g transform="translate(531,88) scale(0.0745)"><use href="#hw" stroke="#3a3a3a" stroke-width="27"/></g>
<path d="M697,124 L714,141 M714,124 L697,141" stroke="#b0b0b0" stroke-width="2.5"/>
<path d="M572,184 L589,194 L572,204 Z" fill="#bdbdbd"/>
<path d="M601,208.5 H1843" stroke="#cfcfcf" stroke-width="2"/>
<path d="M608.2,201 V208 M626.6,196.5 V208 M645.0,201 V208 M663.4,196.5 V208 M681.8,201 V208 M700.2,183 V208 M718.6,201 V208 M737.0,196.5 V208 M755.4,201 V208 M773.8,196.5 V208 M792.1,201 V208 M810.5,196.5 V208 M828.9,201 V208 M847.3,196.5 V208 M865.7,201 V208 M884.1,183 V208 M902.5,201 V208 M920.9,196.5 V208 M939.3,201 V208 M957.7,196.5 V208 M976.0,201 V208 M994.4,196.5 V208 M1012.8,201 V208 M1031.2,196.5 V208 M1049.6,201 V208 M1068.0,183 V208 M1086.4,201 V208 M1104.8,196.5 V208 M1123.2,201 V208 M1141.6,196.5 V208 M1159.9,201 V208 M1178.3,196.5 V208 M1196.7,201 V208 M1215.1,196.5 V208 M1233.5,201 V208 M1251.9,183 V208 M1270.3,201 V208 M1288.7,196.5 V208 M1307.1,201 V208 M1325.5,196.5 V208 M1343.8,201 V208 M1362.2,196.5 V208 M1380.6,201 V208 M1399.0,196.5 V208 M1417.4,201 V208 M1435.8,183 V208 M1454.2,201 V208 M1472.6,196.5 V208 M1491.0,201 V208 M1509.4,196.5 V208 M1527.8,201 V208 M1546.1,196.5 V208 M1564.5,201 V208 M1582.9,196.5 V208 M1601.3,201 V208 M1619.7,183 V208 M1638.1,201 V208 M1656.5,196.5 V208 M1674.9,201 V208 M1693.3,196.5 V208 M1711.7,201 V208 M1730.0,196.5 V208 M1748.4,201 V208 M1766.8,196.5 V208 M1785.2,201 V208 M1803.6,183 V208 M1822.0,201 V208 M1840.4,196.5 V208" stroke="#cfcfcf" stroke-width="1.8"/>
<path d="M594,217 V1008" stroke="#cfcfcf" stroke-width="2"/>
<path d="M569,217.0 H594 M586,235.3 H594 M581,253.7 H594 M586,272.0 H594 M581,290.3 H594 M586,308.7 H594 M581,327.0 H594 M586,345.3 H594 M581,363.7 H594 M586,382.0 H594 M569,400.4 H594 M586,418.7 H594 M581,437.0 H594 M586,455.4 H594 M581,473.7 H594 M586,492.0 H594 M581,510.4 H594 M586,528.7 H594 M581,547.0 H594 M586,565.4 H594 M569,583.7 H594 M586,602.0 H594 M581,620.4 H594 M586,638.7 H594 M581,657.0 H594 M586,675.4 H594 M581,693.7 H594 M586,712.0 H594 M581,730.4 H594 M586,748.7 H594 M569,767.1 H594 M586,785.4 H594 M581,803.7 H594 M586,822.1 H594 M581,840.4 H594 M586,858.7 H594 M581,877.1 H594 M586,895.4 H594 M581,913.7 H594 M586,932.1 H594 M569,950.4 H594 M586,968.7 H594 M581,987.1 H594 M586,1005.4 H594" stroke="#cfcfcf" stroke-width="1.8"/>
<path d="M583,757 L594,763.5 L583,770 Z" fill="#cfcfcf"/><path d="M1746,199 L1760,199 L1753,208 Z" fill="#cfcfcf"/>
<path d="M604,217 H1847" stroke="#f2f000" stroke-width="2" stroke-dasharray="9,9"/>
<path d="M599,1009 H1847" stroke="#f2f000" stroke-width="2" stroke-dasharray="9,9"/>
<defs><g id="hw" fill="none" stroke-linecap="round" stroke-linejoin="round"><path d="M867.0,291.0 C861.8,302.5 844.2,342.0 836.0,360.0 C827.8,378.0 823.0,384.8 818.0,399.0 C813.0,413.2 809.0,431.5 806.0,445.0 C803.0,458.5 801.0,474.2 800.0,480.0"/><path d="M829.0,380.0 C836.7,381.5 859.8,386.2 875.0,389.0 C890.2,391.8 912.5,395.7 920.0,397.0"/><path d="M972.0,305.0 C970.7,316.0 967.7,351.5 964.0,371.0 C960.3,390.5 954.2,407.7 950.0,422.0 C945.8,436.3 940.8,451.2 939.0,457.0"/><path d="M1066.3,450.0 C1070.9,448.1 1084.5,443.2 1094.1,438.9 C1103.7,434.6 1116.6,429.7 1123.7,424.1 C1130.8,418.6 1135.5,411.5 1136.7,405.6 C1137.9,399.7 1135.7,392.1 1131.1,388.9 C1126.5,385.6 1116.8,384.9 1108.9,386.1 C1101.1,387.3 1090.7,392.2 1084.0,396.0 C1077.3,399.8 1073.5,403.0 1069.0,409.0 C1064.5,415.0 1060.2,423.9 1057.0,432.0 C1053.8,440.1 1049.3,448.8 1049.6,457.4 C1049.9,465.9 1053.7,474.6 1058.9,483.3 C1064.2,492.0 1071.5,503.6 1081.1,509.3 C1090.7,515.0 1104.9,517.0 1116.3,517.6 C1127.7,518.2 1138.5,515.9 1149.6,513.0 C1160.7,510.1 1172.5,504.0 1183.0,500.0 C1193.5,496.0 1207.7,490.8 1212.6,488.9"/><path d="M1299.0,337.0 C1300.5,349.3 1306.2,391.2 1308.0,411.0 C1309.8,430.8 1309.7,439.7 1310.0,456.0 C1310.3,472.3 1310.0,500.2 1310.0,509.0"/><path d="M1396.0,333.0 C1397.3,342.3 1402.2,370.5 1404.0,389.0 C1405.8,407.5 1405.7,428.8 1407.0,444.0 C1408.3,459.2 1411.2,474.0 1412.0,480.0"/><path d="M823.0,641.0 C821.8,652.0 817.3,689.5 816.0,707.0 C814.7,724.5 813.5,731.8 815.0,746.0 C816.5,760.2 821.2,781.5 825.0,792.0 C828.8,802.5 832.5,808.5 838.0,809.0 C843.5,809.5 850.3,803.5 858.0,795.0 C865.7,786.5 876.3,771.8 884.0,758.0 C891.7,744.2 897.5,725.5 904.0,712.0 C910.5,698.5 920.2,675.7 923.0,677.0 C925.8,678.3 921.3,704.3 921.0,720.0 C920.7,735.7 919.5,755.5 921.0,771.0 C922.5,786.5 924.2,802.2 930.0,813.0 C935.8,823.8 946.5,835.2 956.0,836.0 C965.5,836.8 976.7,828.8 987.0,818.0 C997.3,807.2 1008.5,788.3 1018.0,771.0 C1027.5,753.7 1035.7,731.2 1044.0,714.0 C1052.3,696.8 1062.5,684.0 1068.0,668.0 C1073.5,652.0 1075.5,626.3 1077.0,618.0"/><path d="M1378.0,782.0 C1378.7,774.5 1379.5,751.7 1382.0,737.0 C1384.5,722.3 1387.0,705.0 1393.0,694.0 C1399.0,683.0 1406.0,678.7 1418.0,671.0 C1430.0,663.3 1457.2,651.8 1465.0,648.0"/><path d="M1546.0,615.0 C1546.5,626.3 1548.0,661.8 1549.0,683.0 C1550.0,704.2 1551.0,726.2 1552.0,742.0 C1553.0,757.8 1554.5,772.0 1555.0,778.0"/><path d="M1656.0,558.0 C1657.0,562.0 1658.8,573.0 1662.0,582.0 C1665.2,591.0 1670.5,601.5 1675.0,612.0 C1679.5,622.5 1684.2,633.2 1689.0,645.0 C1693.8,656.8 1699.0,670.5 1704.0,683.0 C1709.0,695.5 1713.5,708.5 1719.0,720.0 C1724.5,731.5 1734.0,746.7 1737.0,752.0"/><path d="M1656.0,558.0 C1658.3,562.5 1664.3,575.5 1670.0,585.0 C1675.7,594.5 1684.2,604.5 1690.0,615.0 C1695.8,625.5 1700.3,636.8 1705.0,648.0 C1709.7,659.2 1714.0,670.0 1718.0,682.0 C1722.0,694.0 1725.2,708.3 1729.0,720.0 C1732.8,731.7 1739.0,746.7 1741.0,752.0"/><path d="M1742.0,757.0 C1735.0,759.0 1715.0,766.7 1700.0,769.0 C1685.0,771.3 1663.3,772.0 1652.0,771.0 C1640.7,770.0 1632.0,768.3 1632.0,763.0 C1632.0,757.7 1642.3,748.5 1652.0,739.0 C1661.7,729.5 1681.2,713.0 1690.0,706.0 C1698.8,699.0 1702.5,698.5 1705.0,697.0"/><path d="M1738.0,750.0 C1740.3,752.0 1749.7,760.0 1752.0,762.0"/><path d="M1601.7,388.7 C1609.8,387.6 1623.6,389.3 1628.0,394.0 C1632.4,398.7 1636.0,415.0 1635.0,424.0 C1634.0,433.0 1627.7,452.8 1620.8,461.7 C1613.9,470.6 1591.6,489.1 1583.3,490.8 C1575.0,492.5 1562.4,480.2 1558.3,474.2 C1554.2,468.2 1551.3,455.4 1552.5,445.8 C1553.7,436.2 1560.9,409.6 1567.5,402.0 C1574.1,394.4 1593.6,389.8 1601.7,388.7 Z"/><ellipse cx="1190" cy="774" rx="43" ry="43"/></g></defs>
<use href="#hw" stroke="#000" stroke-width="35"/>
<circle cx="1753" cy="763" r="17" fill="#000"/>
<g stroke="#fff" stroke-width="2.2" fill="none"><rect x="1750.5" y="744" width="5" height="12" rx="2"/><rect x="1750.5" y="770" width="5" height="12" rx="2"/><rect x="1734" y="760.5" width="12" height="5" rx="2"/><rect x="1760" y="760.5" width="12" height="5" rx="2"/></g>
<path d="M1783,818 L1786,803 L1797,788 C1800,784 1806,788 1803,792 L1793,806 Z" fill="none" stroke="#222" stroke-width="1.6" stroke-dasharray="2.5,2"/>
<circle cx="1867" cy="195.5" r="8.5" fill="#8c8c8c" stroke="#3c3c3c" stroke-width="4"/><path d="M1873,202 l5,5" stroke="#3c3c3c" stroke-width="3.5"/>
<rect x="570" y="1021" width="25" height="25" fill="#6a6a6a" stroke="#aaa" stroke-width="2" stroke-dasharray="2,3"/>
<path d="M1869,1018 L1887,1051 L1869,1043 L1852,1051 Z" fill="#bdbdbd"/>
<rect x="745" y="1057" width="95" height="30" fill="#434542" stroke="#5c5c5c" stroke-width="2"/>
<rect x="919" y="1057" width="38" height="30" fill="#434542" stroke="#5c5c5c" stroke-width="2"/>
<path d="M986,1080 l12,-10 M996,1072 l4,-3" stroke="#bdbdbd" stroke-width="3"/>
<path d="M1932,133 h9 M1936.5,128 v10" stroke="#2233cc" stroke-width="2.2"/>
<circle cx="2080.5" cy="121.5" r="16" fill="none" stroke="#bdbdbd" stroke-width="3.5"/><path d="M2074,116 c0,-8 13,-8 13,0 c0,5 -6,5 -6,10" fill="none" stroke="#bdbdbd" stroke-width="3.5"/><circle cx="2081" cy="131" r="2.3" fill="#bdbdbd"/>
<path d="M2313,119.5 l14,-8 v16 Z" fill="#bdbdbd"/>
<path d="M2300,168 h17 l-8.5,9 Z" fill="#bdbdbd"/>
<defs><radialGradient id="fz1"><stop offset="0" stop-color="#000"/><stop offset="0.12" stop-color="#111"/><stop offset="0.4" stop-color="#777" stop-opacity="0.85"/><stop offset="0.75" stop-color="#ccc" stop-opacity="0.4"/><stop offset="1" stop-color="#fff" stop-opacity="0"/></radialGradient><radialGradient id="fz2"><stop offset="0" stop-color="#000"/><stop offset="0.22" stop-color="#151515"/><stop offset="0.55" stop-color="#777" stop-opacity="0.85"/><stop offset="0.85" stop-color="#ccc" stop-opacity="0.4"/><stop offset="1" stop-color="#fff" stop-opacity="0"/></radialGradient><radialGradient id="fz3"><stop offset="0" stop-color="#000"/><stop offset="0.4" stop-color="#111"/><stop offset="0.7" stop-color="#555" stop-opacity="0.9"/><stop offset="0.92" stop-color="#bbb" stop-opacity="0.4"/><stop offset="1" stop-color="#fff" stop-opacity="0"/></radialGradient><radialGradient id="fz4"><stop offset="0" stop-color="#000"/><stop offset="0.45" stop-color="#000"/><stop offset="0.8" stop-color="#666" stop-opacity="0.7"/><stop offset="1" stop-color="#fff" stop-opacity="0"/></radialGradient><filter id="blur1"><feGaussianBlur stdDeviation="1.2"/></filter></defs><rect x="2088.5" y="257" width="4.5" height="4.5" fill="#222"/><rect x="2136" y="251" width="64" height="16" fill="#000" filter="url(#blur1)"/><ellipse cx="2242" cy="259" rx="30" ry="12" fill="url(#fz4)"/><path d="M1911,334 H1976" stroke="#111" stroke-width="3"/><circle cx="2017.6" cy="335.2" r="30" fill="url(#fz1)"/><circle cx="2091.7" cy="335.2" r="30" fill="url(#fz2)"/><circle cx="2167.3" cy="335.2" r="30" fill="url(#fz3)"/><circle cx="2242.6" cy="335.2" r="34.4" fill="#000"/><rect x="2055" y="298.5" width="73.5" height="73" fill="none" stroke="#111" stroke-width="2.5"/><path d="M2114,290 l13,-12 v12 Z" fill="#7b8ff0"/><polygon points="1942.8,379.0 1950.4,398.5 1971.3,399.7 1955.2,413.0 1960.4,433.3 1942.8,422.0 1925.2,433.3 1930.4,413.0 1914.3,399.7 1935.2,398.5" fill="#000"/><g fill="#000" opacity="0.9"><rect x="2019.8" y="422.5" width="2.1" height="2.1"/><rect x="2006.5" y="399.4" width="1.4" height="1.4"/><rect x="2038.5" y="410.4" width="1.8" height="1.8"/><rect x="2021.1" y="431.6" width="2.3" height="2.3"/><rect x="2025.1" y="398.3" width="2.7" height="2.7"/><rect x="2027.9" y="421.5" width="3.3" height="3.3"/><rect x="2001.2" y="406.2" width="2.8" height="2.8"/><rect x="2035.5" y="415.9" width="2.6" height="2.6"/><rect x="2018.4" y="409.9" width="3.3" height="3.3"/><rect x="2001.7" y="411.8" width="3.3" height="3.3"/><rect x="2014.0" y="387.9" width="2.1" height="2.1"/><rect x="2022.4" y="397.8" width="3.4" height="3.4"/><rect x="2021.1" y="406.6" width="1.5" height="1.5"/><rect x="2023.4" y="430.6" width="2.2" height="2.2"/><rect x="2013.0" y="402.9" width="2.4" height="2.4"/><rect x="2011.7" y="415.0" width="2.6" height="2.6"/><rect x="2000.6" y="398.1" width="2.8" height="2.8"/><rect x="2037.0" y="400.1" width="3.6" height="3.6"/><rect x="2016.5" y="404.5" width="3.3" height="3.3"/><rect x="2039.4" y="404.1" width="2.6" height="2.6"/><rect x="2017.4" y="402.8" width="3.2" height="3.2"/><rect x="2011.7" y="405.3" width="1.4" height="1.4"/><rect x="2032.7" y="390.7" width="1.4" height="1.4"/><rect x="2022.2" y="398.6" width="1.6" height="1.6"/><rect x="2013.8" y="426.5" width="3.3" height="3.3"/><rect x="2033.4" y="413.0" width="1.3" height="1.3"/><rect x="2017.0" y="400.0" width="3.3" height="3.3"/><rect x="2031.6" y="407.2" width="3.6" height="3.6"/><rect x="2017.8" y="411.2" width="2.6" height="2.6"/><rect x="2024.5" y="409.9" width="2.2" height="2.2"/><rect x="2015.2" y="405.8" width="1.3" height="1.3"/><rect x="2024.6" y="402.5" width="3.5" height="3.5"/><rect x="2026.8" y="402.7" width="2.3" height="2.3"/><rect x="2003.1" y="406.8" width="2.6" height="2.6"/><rect x="2004.5" y="403.2" width="3.5" height="3.5"/><rect x="2007.6" y="408.3" width="2.9" height="2.9"/><rect x="2019.4" y="417.1" width="3.5" height="3.5"/><rect x="2005.1" y="407.0" width="1.2" height="1.2"/><rect x="2006.3" y="416.2" width="1.2" height="1.2"/><rect x="2007.2" y="398.4" width="1.3" height="1.3"/><rect x="2010.4" y="400.2" width="2.8" height="2.8"/><rect x="2008.5" y="422.5" width="3.0" height="3.0"/><rect x="2020.9" y="409.1" width="2.8" height="2.8"/><rect x="2025.7" y="407.2" width="2.3" height="2.3"/><rect x="2011.5" y="404.0" width="2.1" height="2.1"/><rect x="2015.0" y="417.9" width="2.6" height="2.6"/><rect x="2015.7" y="418.3" width="3.1" height="3.1"/><rect x="2032.8" y="411.2" width="3.0" height="3.0"/><rect x="2016.4" y="414.8" width="3.1" height="3.1"/><rect x="2019.2" y="414.3" width="2.2" height="2.2"/><rect x="2017.7" y="405.7" width="2.0" height="2.0"/><rect x="2008.9" y="425.8" width="2.3" height="2.3"/><rect x="2021.9" y="404.8" width="2.0" height="2.0"/><rect x="2006.6" y="392.0" width="2.3" height="2.3"/><rect x="2019.4" y="412.6" width="2.5" height="2.5"/><rect x="2025.8" y="426.7" width="3.2" height="3.2"/><rect x="2021.9" y="415.9" width="3.1" height="3.1"/><rect x="2006.8" y="393.9" width="2.0" height="2.0"/><rect x="2024.3" y="414.7" width="3.1" height="3.1"/><rect x="2017.6" y="418.1" width="2.2" height="2.2"/><rect x="2009.4" y="414.0" width="3.4" height="3.4"/><rect x="2018.9" y="409.0" width="3.5" height="3.5"/><rect x="2035.4" y="393.2" width="2.2" height="2.2"/><rect x="2039.3" y="402.2" width="1.7" height="1.7"/><rect x="2018.2" y="389.0" width="2.8" height="2.8"/><rect x="2010.8" y="407.8" width="2.0" height="2.0"/><rect x="2019.1" y="411.1" width="2.6" height="2.6"/><rect x="2014.4" y="427.5" width="1.3" height="1.3"/><rect x="2032.7" y="399.2" width="3.4" height="3.4"/><rect x="2035.5" y="396.1" width="2.6" height="2.6"/><rect x="2036.7" y="410.3" width="1.6" height="1.6"/><rect x="2013.8" y="424.2" width="2.5" height="2.5"/><rect x="2000.1" y="420.0" width="2.7" height="2.7"/><rect x="2014.9" y="414.8" width="3.3" height="3.3"/><rect x="2000.3" y="411.5" width="2.0" height="2.0"/><rect x="2023.2" y="421.6" width="3.2" height="3.2"/><rect x="2027.7" y="425.4" width="3.4" height="3.4"/><rect x="2025.5" y="390.5" width="1.2" height="1.2"/><rect x="2004.8" y="394.1" width="1.3" height="1.3"/><rect x="2017.8" y="416.3" width="2.5" height="2.5"/><rect x="2008.0" y="414.5" width="3.1" height="3.1"/><rect x="2020.7" y="408.8" width="1.5" height="1.5"/><rect x="2020.5" y="410.5" width="3.5" height="3.5"/><rect x="2020.5" y="406.5" width="2.4" height="2.4"/><rect x="2015.3" y="416.7" width="2.0" height="2.0"/><rect x="2010.0" y="397.1" width="2.1" height="2.1"/><rect x="2022.0" y="417.1" width="1.5" height="1.5"/><rect x="2002.5" y="402.9" width="2.1" height="2.1"/><rect x="2023.5" y="411.4" width="2.1" height="2.1"/><rect x="2004.0" y="397.4" width="2.1" height="2.1"/><rect x="2023.7" y="394.2" width="2.2" height="2.2"/><rect x="2010.0" y="417.9" width="2.9" height="2.9"/><rect x="2004.0" y="416.9" width="2.3" height="2.3"/><rect x="2019.2" y="422.3" width="2.9" height="2.9"/><rect x="2028.8" y="413.6" width="2.2" height="2.2"/><rect x="2034.6" y="393.9" width="2.1" height="2.1"/><rect x="2033.9" y="397.5" width="1.8" height="1.8"/><rect x="2015.0" y="409.7" width="3.2" height="3.2"/><rect x="2007.9" y="391.1" width="3.1" height="3.1"/><rect x="2010.0" y="393.4" width="2.6" height="2.6"/><rect x="2030.5" y="417.6" width="1.2" height="1.2"/><rect x="2030.3" y="423.3" width="1.3" height="1.3"/><rect x="2021.5" y="410.6" width="3.3" height="3.3"/><rect x="2019.2" y="409.7" width="3.2" height="3.2"/><rect x="2033.2" y="422.5" width="2.8" height="2.8"/><rect x="2030.2" y="389.9" width="2.6" height="2.6"/><rect x="2019.2" y="407.5" width="3.0" height="3.0"/><rect x="2001.5" y="407.6" width="1.5" height="1.5"/><rect x="2018.7" y="387.1" width="1.3" height="1.3"/><rect x="2012.4" y="421.4" width="3.2" height="3.2"/><rect x="2019.1" y="414.1" width="1.8" height="1.8"/><rect x="2005.3" y="396.8" width="2.1" height="2.1"/><rect x="2011.7" y="416.6" width="2.0" height="2.0"/><rect x="2016.4" y="410.2" width="2.4" height="2.4"/><rect x="2029.5" y="407.0" width="3.0" height="3.0"/><rect x="2027.7" y="423.0" width="3.0" height="3.0"/><rect x="2012.8" y="397.1" width="2.4" height="2.4"/><rect x="2005.7" y="392.4" width="1.6" height="1.6"/><rect x="2033.6" y="419.0" width="3.4" height="3.4"/><rect x="2007.4" y="407.6" width="2.9" height="2.9"/><rect x="2021.7" y="415.7" width="1.7" height="1.7"/><rect x="2011.4" y="404.4" width="1.8" height="1.8"/><rect x="2010.8" y="388.2" width="1.9" height="1.9"/><rect x="2015.8" y="398.4" width="3.2" height="3.2"/><rect x="2012.3" y="405.0" width="1.7" height="1.7"/><rect x="2031.0" y="410.6" width="2.1" height="2.1"/><rect x="2023.3" y="417.3" width="2.0" height="2.0"/><rect x="2019.5" y="404.4" width="3.6" height="3.6"/><rect x="2004.0" y="410.7" width="2.3" height="2.3"/><rect x="2028.7" y="392.0" width="2.5" height="2.5"/><rect x="2001.5" y="410.8" width="3.3" height="3.3"/><rect x="2004.5" y="419.2" width="3.5" height="3.5"/><rect x="2012.4" y="410.1" width="1.8" height="1.8"/><rect x="2015.5" y="392.7" width="3.5" height="3.5"/><rect x="2023.0" y="403.3" width="1.7" height="1.7"/><rect x="2018.5" y="414.3" width="2.9" height="2.9"/><rect x="2032.1" y="392.5" width="1.8" height="1.8"/><rect x="2024.5" y="402.4" width="2.2" height="2.2"/><rect x="2018.4" y="406.0" width="1.4" height="1.4"/><rect x="2022.9" y="401.8" width="2.1" height="2.1"/><rect x="2004.4" y="400.8" width="1.2" height="1.2"/><rect x="2013.0" y="418.6" width="2.4" height="2.4"/><rect x="2022.4" y="422.9" width="3.5" height="3.5"/><rect x="2008.2" y="417.5" width="1.5" height="1.5"/><rect x="2016.3" y="424.9" width="1.5" height="1.5"/><rect x="2034.9" y="395.0" width="1.4" height="1.4"/><rect x="2028.1" y="405.2" width="3.1" height="3.1"/><rect x="2019.2" y="400.6" width="2.8" height="2.8"/><rect x="2007.9" y="393.0" width="1.8" height="1.8"/><rect x="2019.4" y="386.6" width="2.8" height="2.8"/><rect x="2015.3" y="408.0" width="2.4" height="2.4"/><rect x="2008.4" y="422.7" width="2.8" height="2.8"/><rect x="2013.9" y="406.6" width="2.7" height="2.7"/><rect x="2015.2" y="404.9" width="3.3" height="3.3"/><rect x="2016.6" y="405.6" width="3.4" height="3.4"/><rect x="2024.5" y="415.8" width="2.9" height="2.9"/><rect x="2007.4" y="400.8" width="2.8" height="2.8"/><rect x="2010.5" y="411.0" width="1.6" height="1.6"/><rect x="2034.5" y="416.0" width="3.0" height="3.0"/><rect x="2001.7" y="404.0" width="2.1" height="2.1"/><rect x="2017.8" y="418.9" width="3.3" height="3.3"/><rect x="2031.2" y="412.2" width="1.8" height="1.8"/><rect x="2019.9" y="399.3" width="2.0" height="2.0"/><rect x="2007.6" y="416.6" width="3.1" height="3.1"/><rect x="2006.8" y="424.7" width="1.5" height="1.5"/><rect x="2018.4" y="412.0" width="1.5" height="1.5"/><rect x="2022.0" y="391.5" width="1.6" height="1.6"/><rect x="2022.9" y="418.9" width="3.0" height="3.0"/><rect x="2026.0" y="392.3" width="2.6" height="2.6"/><rect x="2025.2" y="417.2" width="1.7" height="1.7"/><rect x="2004.8" y="406.3" width="1.7" height="1.7"/><rect x="2018.8" y="427.5" width="1.3" height="1.3"/><rect x="2025.6" y="389.1" width="3.5" height="3.5"/><rect x="2008.5" y="418.1" width="2.6" height="2.6"/><rect x="2003.7" y="392.0" width="2.8" height="2.8"/><rect x="2012.6" y="428.1" width="2.4" height="2.4"/><rect x="2004.7" y="398.4" width="1.2" height="1.2"/><rect x="2020.9" y="392.7" width="2.4" height="2.4"/><rect x="2007.0" y="407.0" width="1.7" height="1.7"/><rect x="2017.4" y="408.5" width="2.4" height="2.4"/><rect x="2011.8" y="399.6" width="2.6" height="2.6"/><rect x="2039.0" y="403.5" width="1.5" height="1.5"/><rect x="2022.8" y="394.0" width="1.3" height="1.3"/><rect x="2014.5" y="413.9" width="1.4" height="1.4"/><rect x="1997.8" y="403.6" width="2.0" height="2.0"/><rect x="2030.4" y="396.5" width="1.5" height="1.5"/><rect x="2028.2" y="397.2" width="3.4" height="3.4"/><rect x="2015.0" y="391.4" width="2.0" height="2.0"/><rect x="2026.3" y="388.5" width="3.3" height="3.3"/><rect x="2002.1" y="415.8" width="2.4" height="2.4"/><rect x="2020.0" y="409.8" width="1.4" height="1.4"/><rect x="2020.3" y="413.4" width="2.4" height="2.4"/><rect x="2014.5" y="395.9" width="2.2" height="2.2"/><rect x="2013.8" y="402.0" width="2.3" height="2.3"/><rect x="2019.3" y="398.2" width="1.6" height="1.6"/><rect x="2032.8" y="398.5" width="2.1" height="2.1"/><rect x="2009.6" y="418.5" width="2.6" height="2.6"/><rect x="2018.8" y="408.9" width="1.7" height="1.7"/><rect x="2019.7" y="404.5" width="2.3" height="2.3"/><rect x="2020.9" y="414.5" width="1.6" height="1.6"/><rect x="2014.6" y="411.7" width="1.3" height="1.3"/><rect x="2022.7" y="412.0" width="2.4" height="2.4"/><rect x="2019.6" y="409.1" width="2.3" height="2.3"/><rect x="2004.5" y="418.1" width="1.3" height="1.3"/><rect x="2010.2" y="414.8" width="1.3" height="1.3"/><rect x="2025.0" y="407.4" width="1.4" height="1.4"/><rect x="2013.9" y="409.6" width="2.7" height="2.7"/><rect x="2016.6" y="412.0" width="1.3" height="1.3"/><rect x="2017.7" y="401.2" width="3.1" height="3.1"/><rect x="1997.6" y="413.5" width="1.9" height="1.9"/><rect x="2018.8" y="416.3" width="3.2" height="3.2"/><rect x="2012.4" y="402.1" width="1.4" height="1.4"/><rect x="2009.6" y="388.4" width="2.6" height="2.6"/><rect x="2020.0" y="408.8" width="1.4" height="1.4"/><rect x="2019.5" y="410.0" width="1.3" height="1.3"/><rect x="2006.9" y="391.5" width="1.7" height="1.7"/><rect x="2030.9" y="406.8" width="3.1" height="3.1"/><rect x="2037.7" y="398.0" width="1.3" height="1.3"/><rect x="2013.7" y="423.0" width="3.5" height="3.5"/><rect x="2025.7" y="413.1" width="3.2" height="3.2"/><rect x="2026.6" y="415.6" width="2.0" height="2.0"/><rect x="2009.6" y="389.3" width="1.6" height="1.6"/><rect x="2017.7" y="391.2" width="3.2" height="3.2"/><rect x="1998.5" y="401.7" width="2.1" height="2.1"/><rect x="2013.1" y="412.2" width="3.1" height="3.1"/><rect x="2011.3" y="409.7" width="1.6" height="1.6"/><rect x="2016.0" y="394.0" width="2.9" height="2.9"/><rect x="2009.3" y="416.9" width="1.6" height="1.6"/><rect x="2018.6" y="407.9" width="2.3" height="2.3"/><rect x="2019.7" y="392.3" width="1.4" height="1.4"/><rect x="2020.4" y="428.6" width="2.7" height="2.7"/><rect x="2033.6" y="394.6" width="2.3" height="2.3"/><rect x="2032.9" y="398.1" width="2.0" height="2.0"/><rect x="2017.1" y="410.6" width="2.2" height="2.2"/><rect x="2022.1" y="407.9" width="2.6" height="2.6"/><rect x="2020.9" y="410.5" width="2.8" height="2.8"/><rect x="2018.9" y="410.6" width="1.6" height="1.6"/><rect x="2009.8" y="397.3" width="1.2" height="1.2"/><rect x="2021.6" y="431.0" width="1.7" height="1.7"/><rect x="2008.6" y="404.6" width="3.1" height="3.1"/><rect x="2003.9" y="397.3" width="2.5" height="2.5"/><rect x="2020.8" y="413.7" width="1.4" height="1.4"/><rect x="2020.4" y="405.6" width="1.3" height="1.3"/><rect x="2024.5" y="407.6" width="3.3" height="3.3"/><rect x="2029.1" y="415.0" width="1.7" height="1.7"/><rect x="2026.1" y="395.4" width="2.7" height="2.7"/><rect x="2020.3" y="388.4" width="2.0" height="2.0"/><rect x="2009.6" y="401.8" width="1.5" height="1.5"/><rect x="2026.4" y="396.1" width="3.2" height="3.2"/><rect x="2022.5" y="421.9" width="2.3" height="2.3"/><rect x="2018.4" y="406.2" width="2.0" height="2.0"/><rect x="2016.4" y="409.0" width="2.5" height="2.5"/><rect x="2017.8" y="397.8" width="2.8" height="2.8"/><rect x="2013.9" y="405.0" width="2.0" height="2.0"/><rect x="2027.9" y="408.6" width="2.2" height="2.2"/><rect x="2024.2" y="412.0" width="1.6" height="1.6"/><rect x="2034.7" y="401.4" width="3.3" height="3.3"/><rect x="2033.9" y="407.5" width="3.4" height="3.4"/><rect x="2008.1" y="406.4" width="3.5" height="3.5"/><rect x="2036.9" y="396.2" width="2.4" height="2.4"/><rect x="2020.4" y="398.2" width="3.6" height="3.6"/><rect x="2025.9" y="404.9" width="3.4" height="3.4"/><rect x="2020.1" y="411.7" width="2.9" height="2.9"/><rect x="2015.2" y="421.5" width="2.7" height="2.7"/><rect x="2036.1" y="413.3" width="1.9" height="1.9"/><rect x="2010.3" y="412.6" width="3.0" height="3.0"/><rect x="2018.6" y="400.8" width="1.4" height="1.4"/><rect x="2015.5" y="419.1" width="1.4" height="1.4"/><rect x="2029.2" y="423.8" width="2.9" height="2.9"/><rect x="2041.2" y="405.5" width="3.3" height="3.3"/><rect x="2015.4" y="412.3" width="1.9" height="1.9"/><rect x="2005.8" y="411.9" width="2.5" height="2.5"/><rect x="2006.0" y="424.3" width="1.9" height="1.9"/><rect x="1998.6" y="413.6" width="3.1" height="3.1"/><rect x="2016.8" y="415.4" width="3.1" height="3.1"/><rect x="2022.9" y="409.1" width="2.5" height="2.5"/><rect x="2013.9" y="407.7" width="1.3" height="1.3"/><rect x="2024.1" y="426.5" width="2.3" height="2.3"/><rect x="2037.4" y="406.4" width="3.6" height="3.6"/><rect x="2024.1" y="410.0" width="1.2" height="1.2"/><rect x="2010.5" y="412.6" width="1.3" height="1.3"/><rect x="2015.9" y="407.9" width="1.9" height="1.9"/><rect x="2019.1" y="427.9" width="2.2" height="2.2"/><rect x="2018.7" y="410.4" width="2.2" height="2.2"/><rect x="2007.3" y="397.0" width="3.4" height="3.4"/><rect x="2021.3" y="402.3" width="1.5" height="1.5"/><rect x="2019.8" y="390.0" width="2.4" height="2.4"/><rect x="2025.6" y="396.7" width="1.9" height="1.9"/><rect x="2019.2" y="409.4" width="2.7" height="2.7"/><rect x="2035.7" y="396.0" width="2.3" height="2.3"/><rect x="2007.9" y="390.2" width="3.2" height="3.2"/><rect x="2010.1" y="402.3" width="2.4" height="2.4"/><rect x="2021.4" y="413.6" width="2.8" height="2.8"/><rect x="2032.6" y="408.1" width="2.2" height="2.2"/><rect x="2011.8" y="418.2" width="3.1" height="3.1"/><rect x="1997.6" y="415.3" width="1.6" height="1.6"/><rect x="2013.6" y="421.0" width="2.2" height="2.2"/><rect x="2030.4" y="393.0" width="3.4" height="3.4"/><rect x="2017.9" y="408.0" width="2.6" height="2.6"/><rect x="2006.9" y="405.0" width="1.9" height="1.9"/><rect x="2013.4" y="388.2" width="1.4" height="1.4"/><rect x="2014.0" y="400.2" width="2.4" height="2.4"/><rect x="2036.4" y="395.3" width="2.7" height="2.7"/><rect x="2026.1" y="429.0" width="1.6" height="1.6"/><rect x="2004.2" y="421.9" width="2.0" height="2.0"/><rect x="2015.9" y="430.6" width="3.5" height="3.5"/><rect x="2014.5" y="418.3" width="1.9" height="1.9"/><rect x="2023.6" y="414.0" width="3.6" height="3.6"/><rect x="2024.6" y="411.9" width="1.7" height="1.7"/><rect x="2030.5" y="415.2" width="3.0" height="3.0"/><rect x="2027.0" y="395.6" width="3.2" height="3.2"/><rect x="2026.6" y="409.1" width="3.5" height="3.5"/><rect x="2025.6" y="412.0" width="2.4" height="2.4"/><rect x="2017.3" y="422.5" width="1.3" height="1.3"/><rect x="2020.8" y="430.9" width="1.5" height="1.5"/><rect x="2023.2" y="405.8" width="3.6" height="3.6"/><rect x="2011.6" y="394.7" width="1.5" height="1.5"/><rect x="2035.9" y="414.9" width="1.6" height="1.6"/><rect x="2026.0" y="426.9" width="3.3" height="3.3"/><rect x="2040.0" y="415.5" width="2.5" height="2.5"/><rect x="2016.3" y="411.1" width="2.1" height="2.1"/><rect x="2026.6" y="408.2" width="1.5" height="1.5"/><rect x="2021.2" y="411.9" width="2.0" height="2.0"/><rect x="2021.0" y="407.5" width="1.7" height="1.7"/><rect x="2040.1" y="400.3" width="3.6" height="3.6"/><rect x="2019.0" y="418.3" width="3.5" height="3.5"/><rect x="2001.8" y="410.4" width="2.0" height="2.0"/><rect x="2028.0" y="410.0" width="3.0" height="3.0"/><rect x="2021.6" y="394.8" width="2.3" height="2.3"/><rect x="2007.6" y="406.1" width="2.5" height="2.5"/><rect x="2021.7" y="403.7" width="2.6" height="2.6"/><rect x="2037.0" y="400.6" width="1.6" height="1.6"/><rect x="2038.1" y="404.3" width="1.6" height="1.6"/><rect x="2018.2" y="414.7" width="1.3" height="1.3"/><rect x="2029.5" y="407.3" width="3.3" height="3.3"/><rect x="2019.3" y="409.2" width="3.3" height="3.3"/><rect x="2025.0" y="386.8" width="2.8" height="2.8"/><rect x="2000.7" y="405.9" width="1.4" height="1.4"/><rect x="2007.7" y="405.9" width="1.6" height="1.6"/><rect x="2011.7" y="403.6" width="2.4" height="2.4"/><rect x="2012.7" y="415.0" width="2.1" height="2.1"/><rect x="2000.6" y="395.4" width="3.4" height="3.4"/><rect x="2031.6" y="393.8" width="1.9" height="1.9"/><rect x="2026.3" y="407.7" width="1.5" height="1.5"/><rect x="2001.2" y="408.7" width="2.0" height="2.0"/><rect x="2014.0" y="402.6" width="3.5" height="3.5"/><rect x="2007.1" y="412.4" width="2.5" height="2.5"/><rect x="2034.9" y="392.7" width="2.5" height="2.5"/><rect x="2004.5" y="414.3" width="1.4" height="1.4"/><rect x="2001.0" y="417.8" width="3.1" height="3.1"/><rect x="2037.5" y="416.1" width="2.1" height="2.1"/><rect x="2028.5" y="407.6" width="1.7" height="1.7"/><rect x="1999.1" y="402.6" width="2.2" height="2.2"/><rect x="2030.4" y="396.1" width="2.1" height="2.1"/><rect x="2014.8" y="421.0" width="2.2" height="2.2"/><rect x="2007.7" y="420.3" width="3.3" height="3.3"/><rect x="2014.9" y="406.5" width="1.7" height="1.7"/><rect x="2008.3" y="419.8" width="1.5" height="1.5"/><rect x="2026.4" y="413.1" width="1.9" height="1.9"/><rect x="2032.2" y="411.3" width="3.4" height="3.4"/><rect x="2001.5" y="405.0" width="3.2" height="3.2"/><rect x="2029.9" y="390.7" width="2.3" height="2.3"/><rect x="2017.2" y="405.3" width="3.3" height="3.3"/><rect x="2010.0" y="417.3" width="3.3" height="3.3"/><rect x="2017.5" y="414.3" width="3.2" height="3.2"/><rect x="2016.5" y="407.2" width="1.3" height="1.3"/><rect x="2018.6" y="409.1" width="3.2" height="3.2"/><rect x="2021.9" y="415.8" width="2.1" height="2.1"/><rect x="2007.6" y="408.0" width="2.7" height="2.7"/><rect x="2012.7" y="399.2" width="1.4" height="1.4"/><rect x="2035.5" y="406.6" width="1.4" height="1.4"/><rect x="2001.9" y="415.3" width="3.6" height="3.6"/><rect x="2019.2" y="409.0" width="2.4" height="2.4"/><rect x="2000.3" y="418.6" width="3.2" height="3.2"/><rect x="2013.4" y="418.4" width="2.6" height="2.6"/><rect x="2023.2" y="404.9" width="2.1" height="2.1"/><rect x="2032.2" y="417.1" width="1.3" height="1.3"/><rect x="2031.0" y="403.5" width="2.6" height="2.6"/><rect x="2024.5" y="412.2" width="2.3" height="2.3"/><rect x="2027.3" y="398.2" width="1.9" height="1.9"/><rect x="2034.9" y="407.0" width="2.5" height="2.5"/><rect x="2021.2" y="416.7" width="3.4" height="3.4"/><rect x="2027.8" y="418.8" width="2.7" height="2.7"/><rect x="2007.5" y="423.3" width="3.4" height="3.4"/><rect x="2029.9" y="394.9" width="1.7" height="1.7"/><rect x="2029.3" y="412.9" width="1.9" height="1.9"/><rect x="2025.9" y="428.0" width="1.7" height="1.7"/><rect x="2028.4" y="389.3" width="1.5" height="1.5"/><rect x="2027.8" y="403.4" width="1.7" height="1.7"/><rect x="2019.4" y="410.1" width="2.4" height="2.4"/><rect x="2003.8" y="422.1" width="3.2" height="3.2"/><rect x="2028.7" y="412.5" width="2.1" height="2.1"/><rect x="2021.9" y="415.2" width="1.8" height="1.8"/><rect x="2015.6" y="400.2" width="1.5" height="1.5"/><rect x="2020.9" y="420.1" width="2.6" height="2.6"/><rect x="2019.3" y="425.8" width="1.7" height="1.7"/><rect x="2011.6" y="395.5" width="1.6" height="1.6"/><rect x="2018.9" y="398.4" width="2.5" height="2.5"/><rect x="2006.1" y="399.9" width="2.3" height="2.3"/><rect x="2036.4" y="415.3" width="3.3" height="3.3"/><rect x="2004.4" y="409.7" width="1.8" height="1.8"/><rect x="2032.2" y="398.9" width="1.7" height="1.7"/><rect x="2028.1" y="388.1" width="2.0" height="2.0"/><rect x="2031.2" y="408.4" width="1.6" height="1.6"/><rect x="2016.9" y="399.8" width="3.0" height="3.0"/><rect x="2015.8" y="407.1" width="2.5" height="2.5"/><rect x="2026.1" y="398.9" width="2.5" height="2.5"/><rect x="2026.4" y="400.0" width="2.4" height="2.4"/><rect x="2001.9" y="399.1" width="1.7" height="1.7"/><rect x="2034.0" y="418.9" width="2.5" height="2.5"/><rect x="2012.0" y="428.5" width="3.3" height="3.3"/><rect x="1996.8" y="402.9" width="3.2" height="3.2"/><rect x="2018.7" y="400.7" width="1.2" height="1.2"/><rect x="2011.1" y="392.8" width="2.0" height="2.0"/><rect x="2004.7" y="410.7" width="1.8" height="1.8"/><rect x="2014.2" y="395.5" width="2.1" height="2.1"/><rect x="2029.5" y="417.6" width="2.0" height="2.0"/><rect x="2018.0" y="403.7" width="2.1" height="2.1"/><rect x="2022.4" y="418.9" width="2.6" height="2.6"/><rect x="2020.3" y="410.0" width="2.4" height="2.4"/></g><g fill="#000" opacity="0.9"><rect x="2096.6" y="419.8" width="1.5" height="1.5"/><rect x="2104.3" y="416.9" width="3.1" height="3.1"/><rect x="2102.0" y="404.6" width="2.0" height="2.0"/><rect x="2100.1" y="413.5" width="1.8" height="1.8"/><rect x="2096.2" y="410.4" width="3.2" height="3.2"/><rect x="2080.2" y="412.4" width="1.7" height="1.7"/><rect x="2098.2" y="410.4" width="2.4" height="2.4"/><rect x="2086.1" y="411.0" width="1.6" height="1.6"/><rect x="2112.8" y="410.1" width="2.7" height="2.7"/><rect x="2095.3" y="410.0" width="2.6" height="2.6"/><rect x="2092.4" y="406.8" width="2.1" height="2.1"/><rect x="2101.9" y="410.3" width="2.8" height="2.8"/><rect x="2101.4" y="421.1" width="1.7" height="1.7"/><rect x="2081.6" y="410.9" width="3.0" height="3.0"/><rect x="2091.9" y="402.4" width="2.6" height="2.6"/><rect x="2073.7" y="417.1" width="1.7" height="1.7"/><rect x="2077.1" y="408.5" width="2.0" height="2.0"/><rect x="2097.7" y="412.3" width="2.5" height="2.5"/><rect x="2097.2" y="423.6" width="2.2" height="2.2"/><rect x="2113.2" y="407.3" width="2.7" height="2.7"/><rect x="2091.2" y="412.1" width="2.3" height="2.3"/><rect x="2091.8" y="396.4" width="1.5" height="1.5"/><rect x="2105.8" y="424.5" width="2.7" height="2.7"/><rect x="2073.2" y="412.5" width="1.4" height="1.4"/><rect x="2075.3" y="408.2" width="2.4" height="2.4"/><rect x="2094.8" y="413.8" width="2.5" height="2.5"/><rect x="2095.9" y="409.3" width="1.1" height="1.1"/><rect x="2110.1" y="417.8" width="2.0" height="2.0"/><rect x="2068.5" y="415.7" width="2.4" height="2.4"/><rect x="2090.9" y="423.1" width="1.1" height="1.1"/><rect x="2088.8" y="422.9" width="1.5" height="1.5"/><rect x="2106.4" y="413.2" width="1.8" height="1.8"/><rect x="2095.9" y="410.9" width="2.9" height="2.9"/><rect x="2076.5" y="419.9" width="2.1" height="2.1"/><rect x="2087.6" y="405.9" width="1.6" height="1.6"/><rect x="2072.6" y="415.2" width="1.9" height="1.9"/><rect x="2093.9" y="418.8" width="1.3" height="1.3"/><rect x="2086.2" y="420.4" width="2.3" height="2.3"/><rect x="2085.3" y="408.1" width="1.2" height="1.2"/><rect x="2102.2" y="412.4" width="1.5" height="1.5"/><rect x="2085.1" y="409.1" width="2.8" height="2.8"/><rect x="2078.2" y="404.6" width="2.7" height="2.7"/><rect x="2080.4" y="410.3" width="1.8" height="1.8"/><rect x="2111.4" y="416.4" width="2.2" height="2.2"/><rect x="2111.4" y="420.1" width="2.4" height="2.4"/><rect x="2083.5" y="405.7" width="1.4" height="1.4"/><rect x="2097.9" y="411.3" width="1.9" height="1.9"/><rect x="2096.6" y="411.3" width="2.2" height="2.2"/><rect x="2084.8" y="411.9" width="3.1" height="3.1"/><rect x="2091.9" y="411.5" width="2.1" height="2.1"/><rect x="2111.0" y="411.7" width="3.0" height="3.0"/><rect x="2094.0" y="410.6" width="2.6" height="2.6"/><rect x="2087.9" y="419.3" width="1.8" height="1.8"/><rect x="2090.9" y="414.0" width="2.5" height="2.5"/><rect x="2113.0" y="419.5" width="1.2" height="1.2"/><rect x="2098.4" y="410.4" width="1.3" height="1.3"/><rect x="2091.9" y="402.0" width="2.8" height="2.8"/><rect x="2075.5" y="410.7" width="1.3" height="1.3"/><rect x="2085.9" y="403.3" width="3.2" height="3.2"/><rect x="2095.0" y="411.4" width="2.6" height="2.6"/><rect x="2103.1" y="407.9" width="2.7" height="2.7"/><rect x="2082.0" y="408.6" width="2.1" height="2.1"/><rect x="2091.4" y="410.8" width="1.8" height="1.8"/><rect x="2091.8" y="406.3" width="2.1" height="2.1"/><rect x="2092.0" y="418.0" width="2.5" height="2.5"/><rect x="2091.4" y="395.9" width="2.1" height="2.1"/><rect x="2095.3" y="417.4" width="1.2" height="1.2"/><rect x="2093.4" y="421.4" width="2.4" height="2.4"/><rect x="2092.7" y="415.0" width="1.3" height="1.3"/><rect x="2098.4" y="419.3" width="1.7" height="1.7"/><rect x="2103.9" y="404.7" width="1.8" height="1.8"/><rect x="2090.9" y="411.7" width="2.7" height="2.7"/><rect x="2092.5" y="404.5" width="2.7" height="2.7"/><rect x="2091.4" y="415.7" width="1.6" height="1.6"/><rect x="2097.8" y="421.2" width="2.5" height="2.5"/><rect x="2091.9" y="409.0" width="2.8" height="2.8"/><rect x="2081.6" y="412.3" width="2.2" height="2.2"/><rect x="2086.6" y="413.0" width="2.0" height="2.0"/><rect x="2081.0" y="401.7" width="3.1" height="3.1"/><rect x="2100.2" y="424.9" width="2.9" height="2.9"/><rect x="2086.7" y="396.0" width="1.4" height="1.4"/><rect x="2096.2" y="396.9" width="1.4" height="1.4"/><rect x="2072.6" y="402.7" width="1.7" height="1.7"/><rect x="2106.5" y="399.7" width="2.1" height="2.1"/><rect x="2096.6" y="414.7" width="2.9" height="2.9"/><rect x="2084.1" y="414.1" width="2.1" height="2.1"/><rect x="2099.4" y="409.1" width="1.1" height="1.1"/><rect x="2101.3" y="409.4" width="1.9" height="1.9"/><rect x="2100.8" y="410.5" width="1.3" height="1.3"/><rect x="2098.1" y="408.2" width="1.6" height="1.6"/><rect x="2099.0" y="409.6" width="3.1" height="3.1"/><rect x="2087.9" y="416.3" width="1.6" height="1.6"/><rect x="2077.7" y="408.7" width="2.0" height="2.0"/><rect x="2083.5" y="411.0" width="2.9" height="2.9"/><rect x="2110.4" y="406.2" width="2.9" height="2.9"/><rect x="2099.4" y="413.4" width="1.5" height="1.5"/><rect x="2106.1" y="424.2" width="3.1" height="3.1"/><rect x="2105.5" y="406.3" width="1.4" height="1.4"/><rect x="2090.5" y="411.9" width="3.1" height="3.1"/><rect x="2091.6" y="416.8" width="3.2" height="3.2"/><rect x="2099.5" y="425.5" width="1.8" height="1.8"/><rect x="2090.5" y="409.2" width="3.1" height="3.1"/><rect x="2084.3" y="415.2" width="2.5" height="2.5"/><rect x="2086.0" y="408.6" width="1.4" height="1.4"/><rect x="2091.4" y="411.0" width="3.0" height="3.0"/><rect x="2089.3" y="414.2" width="1.8" height="1.8"/><rect x="2099.5" y="415.2" width="2.3" height="2.3"/><rect x="2084.2" y="414.8" width="1.7" height="1.7"/><rect x="2072.3" y="412.4" width="2.1" height="2.1"/><rect x="2093.9" y="402.7" width="1.4" height="1.4"/><rect x="2102.8" y="423.5" width="2.2" height="2.2"/><rect x="2081.9" y="417.4" width="3.0" height="3.0"/><rect x="2084.9" y="416.1" width="1.9" height="1.9"/><rect x="2107.3" y="411.9" width="2.2" height="2.2"/><rect x="2079.7" y="411.5" width="2.1" height="2.1"/><rect x="2091.1" y="407.6" width="3.3" height="3.3"/><rect x="2109.0" y="420.6" width="1.5" height="1.5"/><rect x="2094.6" y="406.4" width="1.3" height="1.3"/><rect x="2071.6" y="407.8" width="3.0" height="3.0"/><rect x="2110.0" y="400.3" width="1.2" height="1.2"/><rect x="2089.7" y="412.9" width="2.8" height="2.8"/><rect x="2073.9" y="415.0" width="2.9" height="2.9"/><rect x="2110.3" y="411.2" width="3.0" height="3.0"/><rect x="2089.6" y="410.7" width="3.1" height="3.1"/><rect x="2095.0" y="412.4" width="2.9" height="2.9"/><rect x="2089.0" y="422.4" width="1.2" height="1.2"/><rect x="2097.0" y="423.0" width="1.2" height="1.2"/><rect x="2068.8" y="410.3" width="1.6" height="1.6"/><rect x="2086.9" y="399.4" width="2.5" height="2.5"/><rect x="2094.3" y="399.6" width="1.1" height="1.1"/><rect x="2097.7" y="420.1" width="3.2" height="3.2"/><rect x="2095.7" y="421.3" width="1.4" height="1.4"/><rect x="2099.6" y="404.7" width="2.2" height="2.2"/><rect x="2090.2" y="408.7" width="2.7" height="2.7"/><rect x="2099.2" y="397.9" width="1.7" height="1.7"/><rect x="2092.9" y="414.7" width="3.1" height="3.1"/><rect x="2082.0" y="414.0" width="2.2" height="2.2"/><rect x="2089.4" y="405.6" width="1.8" height="1.8"/><rect x="2094.4" y="398.5" width="1.8" height="1.8"/><rect x="2113.4" y="418.0" width="2.7" height="2.7"/><rect x="2082.8" y="407.2" width="3.2" height="3.2"/><rect x="2086.2" y="413.1" width="1.3" height="1.3"/><rect x="2082.8" y="419.7" width="1.9" height="1.9"/><rect x="2108.8" y="407.7" width="2.1" height="2.1"/><rect x="2083.7" y="402.5" width="2.5" height="2.5"/><rect x="2078.0" y="411.6" width="2.2" height="2.2"/><rect x="2095.4" y="407.9" width="2.8" height="2.8"/><rect x="2085.9" y="424.6" width="1.3" height="1.3"/><rect x="2079.9" y="412.1" width="2.7" height="2.7"/><rect x="2094.8" y="416.2" width="1.4" height="1.4"/><rect x="2077.9" y="407.5" width="1.1" height="1.1"/><rect x="2095.2" y="415.0" width="3.2" height="3.2"/><rect x="2077.6" y="414.0" width="1.7" height="1.7"/><rect x="2081.1" y="400.0" width="2.6" height="2.6"/><rect x="2104.8" y="411.4" width="2.2" height="2.2"/><rect x="2112.1" y="414.9" width="1.8" height="1.8"/><rect x="2087.9" y="421.6" width="2.4" height="2.4"/><rect x="2070.4" y="411.6" width="2.2" height="2.2"/><rect x="2091.1" y="412.6" width="2.3" height="2.3"/><rect x="2082.8" y="418.4" width="1.9" height="1.9"/><rect x="2093.9" y="411.3" width="1.4" height="1.4"/><rect x="2110.5" y="419.1" width="2.4" height="2.4"/><rect x="2093.7" y="423.2" width="2.5" height="2.5"/><rect x="2110.5" y="416.1" width="1.6" height="1.6"/><rect x="2097.2" y="411.2" width="1.7" height="1.7"/><rect x="2092.5" y="425.4" width="2.9" height="2.9"/><rect x="2088.0" y="409.8" width="2.0" height="2.0"/><rect x="2091.7" y="409.9" width="3.1" height="3.1"/><rect x="2105.2" y="398.6" width="2.6" height="2.6"/><rect x="2074.3" y="400.8" width="1.7" height="1.7"/><rect x="2091.0" y="413.8" width="1.5" height="1.5"/><rect x="2093.4" y="409.2" width="2.7" height="2.7"/><rect x="2074.6" y="420.0" width="2.8" height="2.8"/><rect x="2084.0" y="398.5" width="1.2" height="1.2"/><rect x="2091.4" y="418.1" width="2.0" height="2.0"/><rect x="2081.6" y="398.7" width="2.7" height="2.7"/><rect x="2109.0" y="406.2" width="1.9" height="1.9"/><rect x="2072.9" y="410.7" width="2.9" height="2.9"/><rect x="2085.3" y="416.1" width="2.5" height="2.5"/><rect x="2095.4" y="425.6" width="1.1" height="1.1"/><rect x="2084.4" y="404.3" width="1.5" height="1.5"/><rect x="2080.4" y="407.7" width="3.2" height="3.2"/><rect x="2104.3" y="404.6" width="3.0" height="3.0"/><rect x="2096.4" y="409.0" width="2.9" height="2.9"/><rect x="2104.8" y="397.6" width="2.8" height="2.8"/><rect x="2087.3" y="413.9" width="2.5" height="2.5"/><rect x="2097.2" y="423.5" width="2.4" height="2.4"/><rect x="2097.2" y="405.4" width="1.8" height="1.8"/><rect x="2106.9" y="404.9" width="1.9" height="1.9"/><rect x="2081.0" y="408.4" width="2.5" height="2.5"/><rect x="2083.8" y="410.7" width="3.3" height="3.3"/><rect x="2107.2" y="402.9" width="1.7" height="1.7"/><rect x="2099.0" y="422.8" width="2.9" height="2.9"/><rect x="2088.5" y="407.8" width="2.7" height="2.7"/><rect x="2081.7" y="410.3" width="2.4" height="2.4"/><rect x="2076.0" y="414.8" width="2.8" height="2.8"/><rect x="2096.2" y="411.0" width="2.4" height="2.4"/><rect x="2108.9" y="407.5" width="2.4" height="2.4"/><rect x="2093.2" y="410.6" width="2.8" height="2.8"/><rect x="2081.1" y="404.2" width="1.8" height="1.8"/><rect x="2089.3" y="409.4" width="2.3" height="2.3"/><rect x="2091.3" y="426.3" width="2.9" height="2.9"/><rect x="2073.0" y="413.4" width="1.9" height="1.9"/><rect x="2087.2" y="410.8" width="3.0" height="3.0"/><rect x="2094.1" y="398.7" width="1.3" height="1.3"/><rect x="2092.6" y="411.0" width="2.3" height="2.3"/><rect x="2090.1" y="411.4" width="2.0" height="2.0"/><rect x="2105.1" y="404.3" width="1.8" height="1.8"/><rect x="2096.5" y="405.2" width="3.1" height="3.1"/><rect x="2090.1" y="412.4" width="3.2" height="3.2"/><rect x="2099.4" y="413.4" width="2.8" height="2.8"/><rect x="2103.6" y="417.6" width="3.0" height="3.0"/><rect x="2083.8" y="407.8" width="2.8" height="2.8"/><rect x="2099.6" y="402.4" width="2.5" height="2.5"/><rect x="2087.3" y="418.0" width="3.3" height="3.3"/><rect x="2092.5" y="411.3" width="1.5" height="1.5"/><rect x="2095.6" y="424.3" width="1.5" height="1.5"/><rect x="2102.1" y="422.5" width="1.5" height="1.5"/><rect x="2105.1" y="410.1" width="3.1" height="3.1"/><rect x="2095.2" y="407.5" width="2.8" height="2.8"/><rect x="2086.4" y="413.6" width="1.2" height="1.2"/><rect x="2088.0" y="401.9" width="1.8" height="1.8"/><rect x="2095.5" y="407.8" width="2.1" height="2.1"/><rect x="2101.1" y="414.7" width="3.0" height="3.0"/><rect x="2087.3" y="411.3" width="1.6" height="1.6"/><rect x="2087.2" y="407.1" width="3.1" height="3.1"/><rect x="2113.0" y="416.6" width="2.5" height="2.5"/><rect x="2096.9" y="405.3" width="1.3" height="1.3"/><rect x="2100.3" y="420.8" width="1.2" height="1.2"/><rect x="2108.0" y="419.6" width="3.0" height="3.0"/><rect x="2105.7" y="400.5" width="2.3" height="2.3"/><rect x="2105.4" y="403.0" width="2.3" height="2.3"/><rect x="2091.5" y="411.6" width="1.3" height="1.3"/><rect x="2092.4" y="419.6" width="1.4" height="1.4"/><rect x="2107.8" y="409.4" width="2.7" height="2.7"/><rect x="2097.9" y="408.5" width="3.0" height="3.0"/><rect x="2100.3" y="409.9" width="1.4" height="1.4"/><rect x="2099.4" y="397.5" width="2.9" height="2.9"/><rect x="2078.8" y="417.0" width="1.4" height="1.4"/><rect x="2093.6" y="418.9" width="2.7" height="2.7"/><rect x="2112.3" y="419.3" width="1.2" height="1.2"/><rect x="2099.6" y="410.4" width="2.9" height="2.9"/><rect x="2102.4" y="397.3" width="2.1" height="2.1"/><rect x="2089.6" y="406.0" width="2.9" height="2.9"/><rect x="2109.8" y="420.4" width="2.4" height="2.4"/><rect x="2114.4" y="417.1" width="1.8" height="1.8"/><rect x="2099.6" y="413.4" width="1.2" height="1.2"/><rect x="2088.7" y="423.0" width="3.3" height="3.3"/><rect x="2077.6" y="401.0" width="2.9" height="2.9"/><rect x="2090.0" y="404.4" width="1.7" height="1.7"/><rect x="2100.7" y="419.3" width="1.5" height="1.5"/><rect x="2091.8" y="405.2" width="2.4" height="2.4"/><rect x="2076.3" y="408.2" width="1.4" height="1.4"/><rect x="2091.7" y="422.9" width="1.6" height="1.6"/><rect x="2080.9" y="397.6" width="2.0" height="2.0"/><rect x="2108.4" y="408.8" width="3.2" height="3.2"/><rect x="2073.0" y="409.2" width="2.6" height="2.6"/><rect x="2097.2" y="419.9" width="2.4" height="2.4"/><rect x="2075.3" y="413.8" width="3.1" height="3.1"/><rect x="2098.2" y="398.4" width="1.4" height="1.4"/></g><g fill="#000" opacity="0.85"><rect x="2165.2" y="391.4" width="2.9" height="2.9"/><rect x="2172.3" y="408.9" width="3.0" height="3.0"/><rect x="2159.7" y="423.2" width="2.2" height="2.2"/><rect x="2161.7" y="416.8" width="2.1" height="2.1"/><rect x="2178.4" y="407.3" width="2.6" height="2.6"/><rect x="2164.3" y="427.9" width="2.2" height="2.2"/><rect x="2167.9" y="384.6" width="1.2" height="1.2"/><rect x="2179.4" y="405.2" width="1.5" height="1.5"/><rect x="2166.2" y="409.6" width="1.5" height="1.5"/><rect x="2175.2" y="391.6" width="2.7" height="2.7"/><rect x="2169.8" y="412.3" width="1.8" height="1.8"/><rect x="2155.8" y="409.3" width="1.6" height="1.6"/><rect x="2167.6" y="391.8" width="1.6" height="1.6"/><rect x="2168.9" y="405.9" width="2.2" height="2.2"/><rect x="2168.9" y="410.5" width="2.0" height="2.0"/><rect x="2157.4" y="406.6" width="1.8" height="1.8"/><rect x="2181.0" y="399.4" width="1.3" height="1.3"/><rect x="2184.9" y="409.6" width="1.8" height="1.8"/><rect x="2171.6" y="412.6" width="2.4" height="2.4"/><rect x="2171.8" y="419.3" width="2.4" height="2.4"/><rect x="2161.4" y="423.9" width="2.9" height="2.9"/><rect x="2171.6" y="391.3" width="2.3" height="2.3"/><rect x="2164.2" y="426.0" width="2.3" height="2.3"/><rect x="2160.6" y="401.1" width="2.5" height="2.5"/><rect x="2172.1" y="428.2" width="3.0" height="3.0"/><rect x="2173.6" y="410.7" width="3.0" height="3.0"/><rect x="2180.9" y="420.1" width="2.2" height="2.2"/><rect x="2178.9" y="416.5" width="1.0" height="1.0"/><rect x="2172.1" y="400.9" width="2.8" height="2.8"/><rect x="2171.0" y="405.8" width="1.8" height="1.8"/><rect x="2176.2" y="426.3" width="1.2" height="1.2"/><rect x="2170.9" y="410.7" width="2.7" height="2.7"/><rect x="2168.6" y="419.1" width="1.9" height="1.9"/><rect x="2160.9" y="404.7" width="2.9" height="2.9"/><rect x="2163.6" y="420.9" width="2.7" height="2.7"/><rect x="2168.7" y="414.9" width="2.7" height="2.7"/><rect x="2162.3" y="431.2" width="2.6" height="2.6"/><rect x="2163.8" y="416.4" width="1.2" height="1.2"/><rect x="2174.5" y="399.2" width="1.7" height="1.7"/><rect x="2170.6" y="415.6" width="2.7" height="2.7"/><rect x="2175.5" y="420.8" width="2.2" height="2.2"/><rect x="2159.1" y="406.9" width="1.8" height="1.8"/><rect x="2173.7" y="430.1" width="2.8" height="2.8"/><rect x="2163.7" y="405.5" width="2.8" height="2.8"/><rect x="2169.6" y="414.5" width="2.3" height="2.3"/><rect x="2173.7" y="394.2" width="1.2" height="1.2"/><rect x="2172.0" y="408.1" width="1.7" height="1.7"/><rect x="2182.4" y="407.2" width="2.5" height="2.5"/><rect x="2181.7" y="419.6" width="1.8" height="1.8"/><rect x="2182.4" y="410.3" width="2.9" height="2.9"/><rect x="2176.8" y="412.9" width="2.8" height="2.8"/><rect x="2165.4" y="417.3" width="2.6" height="2.6"/><rect x="2152.7" y="418.5" width="2.7" height="2.7"/><rect x="2176.5" y="393.2" width="1.4" height="1.4"/><rect x="2164.4" y="393.2" width="2.0" height="2.0"/><rect x="2162.8" y="404.8" width="1.4" height="1.4"/><rect x="2174.7" y="402.8" width="1.2" height="1.2"/><rect x="2178.0" y="406.5" width="2.4" height="2.4"/><rect x="2166.7" y="413.3" width="1.7" height="1.7"/><rect x="2171.3" y="401.0" width="2.8" height="2.8"/><rect x="2163.3" y="432.0" width="1.4" height="1.4"/><rect x="2165.7" y="410.4" width="1.3" height="1.3"/><rect x="2161.4" y="407.2" width="2.1" height="2.1"/><rect x="2169.8" y="418.6" width="1.6" height="1.6"/><rect x="2170.1" y="406.9" width="1.8" height="1.8"/><rect x="2175.0" y="395.5" width="1.5" height="1.5"/><rect x="2171.1" y="408.7" width="1.3" height="1.3"/><rect x="2176.9" y="410.2" width="2.7" height="2.7"/><rect x="2167.3" y="417.9" width="2.6" height="2.6"/><rect x="2169.0" y="409.2" width="2.3" height="2.3"/><rect x="2176.9" y="417.0" width="1.3" height="1.3"/><rect x="2156.6" y="394.8" width="1.9" height="1.9"/><rect x="2166.8" y="426.7" width="2.4" height="2.4"/><rect x="2173.2" y="411.6" width="1.8" height="1.8"/><rect x="2162.9" y="408.5" width="2.3" height="2.3"/><rect x="2168.0" y="433.6" width="1.7" height="1.7"/><rect x="2168.8" y="411.9" width="1.3" height="1.3"/><rect x="2171.8" y="432.5" width="1.8" height="1.8"/><rect x="2153.1" y="417.9" width="2.9" height="2.9"/><rect x="2169.0" y="400.8" width="1.7" height="1.7"/><rect x="2163.1" y="408.5" width="1.7" height="1.7"/><rect x="2169.7" y="416.6" width="2.5" height="2.5"/><rect x="2161.7" y="400.6" width="1.9" height="1.9"/><rect x="2159.2" y="396.0" width="1.0" height="1.0"/><rect x="2173.4" y="397.1" width="1.7" height="1.7"/><rect x="2181.5" y="403.3" width="1.7" height="1.7"/><rect x="2176.8" y="410.8" width="1.9" height="1.9"/><rect x="2166.8" y="411.4" width="2.2" height="2.2"/><rect x="2168.1" y="430.2" width="2.1" height="2.1"/><rect x="2164.7" y="430.9" width="1.9" height="1.9"/><rect x="2173.5" y="413.4" width="1.1" height="1.1"/><rect x="2154.3" y="419.5" width="2.9" height="2.9"/><rect x="2166.5" y="404.3" width="1.5" height="1.5"/><rect x="2170.6" y="420.0" width="2.3" height="2.3"/><rect x="2177.7" y="410.8" width="1.9" height="1.9"/><rect x="2160.8" y="389.3" width="1.8" height="1.8"/><rect x="2164.0" y="403.4" width="1.9" height="1.9"/><rect x="2167.6" y="407.2" width="2.0" height="2.0"/><rect x="2164.5" y="408.7" width="1.5" height="1.5"/><rect x="2171.6" y="398.9" width="1.4" height="1.4"/><rect x="2166.4" y="424.0" width="1.8" height="1.8"/><rect x="2164.6" y="417.1" width="1.4" height="1.4"/><rect x="2157.5" y="408.3" width="1.2" height="1.2"/><rect x="2163.2" y="403.5" width="3.0" height="3.0"/><rect x="2171.3" y="407.0" width="2.4" height="2.4"/><rect x="2167.0" y="412.2" width="2.8" height="2.8"/><rect x="2180.1" y="396.8" width="2.3" height="2.3"/><rect x="2178.7" y="406.5" width="2.4" height="2.4"/><rect x="2159.9" y="389.4" width="2.7" height="2.7"/><rect x="2167.0" y="415.5" width="2.1" height="2.1"/><rect x="2162.6" y="402.8" width="2.7" height="2.7"/><rect x="2175.7" y="392.8" width="2.1" height="2.1"/><rect x="2167.1" y="402.5" width="2.6" height="2.6"/><rect x="2179.4" y="426.6" width="2.3" height="2.3"/><rect x="2167.8" y="415.3" width="2.2" height="2.2"/><rect x="2156.3" y="413.3" width="1.2" height="1.2"/><rect x="2174.4" y="399.5" width="1.9" height="1.9"/><rect x="2167.7" y="391.2" width="1.9" height="1.9"/><rect x="2166.1" y="422.4" width="1.1" height="1.1"/><rect x="2168.0" y="431.7" width="1.2" height="1.2"/><rect x="2181.2" y="420.9" width="1.7" height="1.7"/><rect x="2157.9" y="405.6" width="2.4" height="2.4"/><rect x="2162.8" y="428.4" width="1.0" height="1.0"/><rect x="2172.1" y="400.6" width="2.3" height="2.3"/><rect x="2164.1" y="428.7" width="1.8" height="1.8"/><rect x="2163.3" y="402.6" width="2.7" height="2.7"/><rect x="2169.2" y="402.0" width="2.5" height="2.5"/><rect x="2173.2" y="406.0" width="1.4" height="1.4"/><rect x="2183.4" y="397.8" width="1.3" height="1.3"/><rect x="2171.1" y="383.7" width="1.5" height="1.5"/><rect x="2169.7" y="399.3" width="2.6" height="2.6"/><rect x="2159.5" y="408.0" width="1.2" height="1.2"/><rect x="2161.3" y="392.5" width="1.6" height="1.6"/><rect x="2170.6" y="409.8" width="1.5" height="1.5"/><rect x="2181.7" y="408.4" width="2.8" height="2.8"/><rect x="2168.5" y="403.9" width="1.8" height="1.8"/><rect x="2182.6" y="401.5" width="3.0" height="3.0"/><rect x="2173.9" y="390.5" width="2.5" height="2.5"/><rect x="2175.6" y="402.1" width="1.1" height="1.1"/><rect x="2168.3" y="409.4" width="1.5" height="1.5"/><rect x="2163.7" y="404.0" width="1.5" height="1.5"/><rect x="2174.4" y="415.1" width="2.0" height="2.0"/><rect x="2154.9" y="394.9" width="1.1" height="1.1"/><rect x="2168.4" y="411.8" width="2.9" height="2.9"/><rect x="2160.5" y="394.9" width="2.6" height="2.6"/><rect x="2184.1" y="409.2" width="1.7" height="1.7"/><rect x="2163.1" y="399.8" width="2.5" height="2.5"/><rect x="2166.7" y="417.4" width="1.5" height="1.5"/><rect x="2167.1" y="395.1" width="1.3" height="1.3"/><rect x="2162.0" y="422.0" width="1.7" height="1.7"/><rect x="2156.2" y="396.0" width="2.3" height="2.3"/><rect x="2170.5" y="399.5" width="2.7" height="2.7"/><rect x="2177.7" y="403.1" width="1.0" height="1.0"/><rect x="2180.0" y="419.8" width="2.7" height="2.7"/><rect x="2167.0" y="393.8" width="2.1" height="2.1"/><rect x="2176.7" y="420.4" width="3.0" height="3.0"/><rect x="2171.6" y="425.9" width="2.7" height="2.7"/><rect x="2164.4" y="399.8" width="1.5" height="1.5"/><rect x="2166.8" y="383.6" width="2.8" height="2.8"/><rect x="2157.8" y="421.1" width="2.6" height="2.6"/><rect x="2159.0" y="423.8" width="1.8" height="1.8"/><rect x="2168.5" y="408.8" width="2.4" height="2.4"/><rect x="2168.5" y="406.9" width="1.1" height="1.1"/><rect x="2166.6" y="415.3" width="2.5" height="2.5"/><rect x="2172.5" y="424.7" width="2.1" height="2.1"/><rect x="2159.8" y="428.0" width="1.9" height="1.9"/><rect x="2156.5" y="407.4" width="1.8" height="1.8"/><rect x="2174.9" y="432.6" width="2.5" height="2.5"/><rect x="2159.5" y="404.6" width="2.2" height="2.2"/><rect x="2168.0" y="411.6" width="2.1" height="2.1"/><rect x="2170.4" y="406.6" width="3.0" height="3.0"/><rect x="2156.6" y="428.0" width="2.5" height="2.5"/><rect x="2167.9" y="416.0" width="2.8" height="2.8"/><rect x="2182.5" y="405.9" width="2.2" height="2.2"/><rect x="2155.2" y="402.9" width="2.6" height="2.6"/><rect x="2171.5" y="400.7" width="2.7" height="2.7"/><rect x="2178.7" y="403.9" width="1.0" height="1.0"/><rect x="2173.0" y="426.2" width="1.9" height="1.9"/><rect x="2178.6" y="399.6" width="2.4" height="2.4"/><rect x="2174.2" y="421.5" width="2.4" height="2.4"/><rect x="2182.0" y="396.4" width="1.5" height="1.5"/><rect x="2151.8" y="408.5" width="1.2" height="1.2"/><rect x="2172.1" y="411.5" width="2.5" height="2.5"/><rect x="2162.7" y="426.7" width="2.7" height="2.7"/><rect x="2168.9" y="407.2" width="2.4" height="2.4"/><rect x="2172.3" y="389.7" width="2.7" height="2.7"/><rect x="2173.1" y="392.6" width="2.7" height="2.7"/><rect x="2166.0" y="407.7" width="1.6" height="1.6"/><rect x="2174.6" y="404.4" width="1.9" height="1.9"/><rect x="2177.1" y="394.8" width="2.6" height="2.6"/><rect x="2159.1" y="411.6" width="1.2" height="1.2"/><rect x="2169.6" y="414.2" width="2.1" height="2.1"/><rect x="2166.7" y="408.3" width="2.3" height="2.3"/><rect x="2174.6" y="416.0" width="1.1" height="1.1"/><rect x="2165.3" y="409.6" width="2.9" height="2.9"/><rect x="2159.1" y="426.4" width="1.9" height="1.9"/><rect x="2161.7" y="429.4" width="1.5" height="1.5"/><rect x="2156.9" y="407.1" width="3.0" height="3.0"/><rect x="2168.1" y="406.7" width="1.9" height="1.9"/><rect x="2182.7" y="401.8" width="1.7" height="1.7"/><rect x="2172.4" y="415.2" width="2.5" height="2.5"/><rect x="2175.0" y="431.0" width="1.5" height="1.5"/><rect x="2163.9" y="390.4" width="1.5" height="1.5"/><rect x="2157.1" y="406.7" width="1.5" height="1.5"/><rect x="2157.3" y="405.2" width="2.9" height="2.9"/><rect x="2167.7" y="414.8" width="2.0" height="2.0"/><rect x="2160.9" y="400.4" width="2.8" height="2.8"/><rect x="2171.4" y="423.3" width="1.9" height="1.9"/><rect x="2171.3" y="421.9" width="1.9" height="1.9"/><rect x="2158.8" y="424.1" width="3.0" height="3.0"/><rect x="2173.1" y="407.4" width="1.7" height="1.7"/><rect x="2170.4" y="407.8" width="1.2" height="1.2"/><rect x="2183.6" y="419.1" width="2.0" height="2.0"/><rect x="2166.3" y="410.3" width="2.8" height="2.8"/><rect x="2180.9" y="407.9" width="2.8" height="2.8"/><rect x="2162.8" y="404.7" width="1.4" height="1.4"/><rect x="2167.4" y="413.9" width="1.7" height="1.7"/><rect x="2169.6" y="409.3" width="2.8" height="2.8"/><rect x="2176.8" y="390.3" width="1.7" height="1.7"/><rect x="2158.9" y="413.7" width="2.6" height="2.6"/><rect x="2165.3" y="423.2" width="2.1" height="2.1"/><rect x="2172.3" y="399.5" width="1.0" height="1.0"/><rect x="2155.9" y="422.6" width="1.3" height="1.3"/><rect x="2166.4" y="405.3" width="1.5" height="1.5"/><rect x="2166.8" y="406.0" width="1.9" height="1.9"/><rect x="2162.0" y="402.5" width="2.5" height="2.5"/><rect x="2171.8" y="401.3" width="2.5" height="2.5"/><rect x="2168.9" y="391.4" width="2.2" height="2.2"/><rect x="2156.5" y="400.2" width="2.4" height="2.4"/><rect x="2166.9" y="427.4" width="2.4" height="2.4"/><rect x="2153.4" y="414.6" width="1.6" height="1.6"/><rect x="2158.5" y="403.5" width="2.2" height="2.2"/><rect x="2173.4" y="426.3" width="1.2" height="1.2"/><rect x="2160.0" y="406.0" width="2.4" height="2.4"/><rect x="2179.0" y="388.0" width="1.5" height="1.5"/><rect x="2176.1" y="401.2" width="2.0" height="2.0"/><rect x="2183.0" y="414.8" width="1.5" height="1.5"/><rect x="2167.4" y="418.5" width="1.5" height="1.5"/><rect x="2167.1" y="417.9" width="2.1" height="2.1"/><rect x="2160.0" y="425.2" width="2.9" height="2.9"/></g><g fill="#000" opacity="0.55"><rect x="2252.8" y="403.3" width="2.1" height="2.1"/><rect x="2241.3" y="389.5" width="1.6" height="1.6"/><rect x="2250.0" y="425.3" width="2.1" height="2.1"/><rect x="2233.2" y="421.3" width="1.0" height="1.0"/><rect x="2247.9" y="386.2" width="2.6" height="2.6"/><rect x="2256.5" y="419.1" width="2.3" height="2.3"/><rect x="2253.3" y="419.8" width="1.2" height="1.2"/><rect x="2243.5" y="408.7" width="1.4" height="1.4"/><rect x="2252.2" y="395.2" width="2.3" height="2.3"/><rect x="2248.0" y="406.7" width="2.4" height="2.4"/><rect x="2256.5" y="397.5" width="1.5" height="1.5"/><rect x="2248.7" y="418.2" width="1.6" height="1.6"/><rect x="2242.2" y="424.7" width="2.0" height="2.0"/><rect x="2243.0" y="413.0" width="1.8" height="1.8"/><rect x="2239.2" y="391.1" width="2.1" height="2.1"/><rect x="2258.4" y="396.2" width="1.7" height="1.7"/><rect x="2242.8" y="390.6" width="1.5" height="1.5"/><rect x="2248.5" y="416.7" width="2.2" height="2.2"/><rect x="2243.3" y="398.9" width="1.9" height="1.9"/><rect x="2257.1" y="414.6" width="1.7" height="1.7"/><rect x="2245.7" y="386.6" width="1.0" height="1.0"/><rect x="2248.5" y="406.4" width="2.6" height="2.6"/><rect x="2249.9" y="407.0" width="1.4" height="1.4"/><rect x="2256.9" y="425.1" width="2.3" height="2.3"/><rect x="2262.8" y="403.4" width="1.5" height="1.5"/><rect x="2244.8" y="397.7" width="1.5" height="1.5"/><rect x="2227.5" y="415.6" width="1.5" height="1.5"/><rect x="2229.5" y="402.1" width="2.3" height="2.3"/><rect x="2232.0" y="409.7" width="1.9" height="1.9"/><rect x="2225.5" y="412.1" width="1.1" height="1.1"/><rect x="2244.0" y="409.0" width="1.6" height="1.6"/><rect x="2252.3" y="394.9" width="2.0" height="2.0"/><rect x="2262.0" y="399.6" width="1.4" height="1.4"/><rect x="2245.8" y="421.5" width="1.3" height="1.3"/><rect x="2241.0" y="406.0" width="1.6" height="1.6"/><rect x="2242.0" y="400.2" width="1.2" height="1.2"/><rect x="2243.2" y="401.7" width="2.5" height="2.5"/><rect x="2226.8" y="393.4" width="1.9" height="1.9"/><rect x="2235.7" y="408.1" width="1.0" height="1.0"/><rect x="2249.6" y="405.7" width="1.0" height="1.0"/><rect x="2256.2" y="401.8" width="1.9" height="1.9"/><rect x="2259.4" y="398.6" width="1.4" height="1.4"/><rect x="2239.8" y="424.0" width="2.1" height="2.1"/><rect x="2244.4" y="414.9" width="1.8" height="1.8"/><rect x="2261.9" y="414.9" width="2.1" height="2.1"/><rect x="2252.1" y="419.9" width="2.0" height="2.0"/><rect x="2253.2" y="413.8" width="2.3" height="2.3"/><rect x="2225.7" y="412.7" width="1.3" height="1.3"/><rect x="2260.3" y="407.4" width="1.9" height="1.9"/><rect x="2253.2" y="408.3" width="0.9" height="0.9"/><rect x="2238.2" y="409.7" width="1.3" height="1.3"/><rect x="2241.7" y="412.0" width="1.4" height="1.4"/><rect x="2238.9" y="407.5" width="1.9" height="1.9"/><rect x="2260.6" y="401.9" width="2.6" height="2.6"/><rect x="2256.4" y="418.3" width="1.3" height="1.3"/><rect x="2255.4" y="402.3" width="2.2" height="2.2"/><rect x="2244.0" y="403.3" width="1.1" height="1.1"/><rect x="2250.8" y="388.8" width="1.7" height="1.7"/><rect x="2244.3" y="407.8" width="2.3" height="2.3"/><rect x="2239.8" y="397.8" width="2.1" height="2.1"/><rect x="2243.4" y="407.3" width="2.2" height="2.2"/><rect x="2264.4" y="404.7" width="2.5" height="2.5"/><rect x="2228.7" y="413.4" width="1.1" height="1.1"/><rect x="2247.7" y="391.3" width="1.6" height="1.6"/><rect x="2248.6" y="409.3" width="1.6" height="1.6"/><rect x="2254.4" y="401.6" width="2.5" height="2.5"/><rect x="2246.2" y="414.5" width="1.3" height="1.3"/><rect x="2238.7" y="426.8" width="1.6" height="1.6"/><rect x="2235.9" y="423.3" width="1.7" height="1.7"/><rect x="2256.1" y="395.4" width="2.4" height="2.4"/><rect x="2233.5" y="412.4" width="1.7" height="1.7"/><rect x="2266.1" y="405.8" width="1.9" height="1.9"/><rect x="2240.7" y="407.7" width="2.4" height="2.4"/><rect x="2234.6" y="400.4" width="1.2" height="1.2"/><rect x="2225.7" y="410.9" width="1.4" height="1.4"/><rect x="2242.0" y="421.1" width="1.8" height="1.8"/><rect x="2245.6" y="407.7" width="1.6" height="1.6"/><rect x="2240.6" y="397.4" width="0.9" height="0.9"/><rect x="2243.5" y="413.6" width="2.3" height="2.3"/><rect x="2246.6" y="431.0" width="1.4" height="1.4"/><rect x="2243.7" y="408.3" width="1.8" height="1.8"/><rect x="2223.9" y="405.7" width="2.1" height="2.1"/><rect x="2241.4" y="407.1" width="2.6" height="2.6"/><rect x="2243.4" y="414.6" width="1.2" height="1.2"/><rect x="2229.0" y="398.8" width="1.5" height="1.5"/><rect x="2243.3" y="408.1" width="2.0" height="2.0"/><rect x="2242.4" y="403.8" width="1.3" height="1.3"/><rect x="2243.5" y="389.7" width="1.1" height="1.1"/><rect x="2261.3" y="406.2" width="2.2" height="2.2"/><rect x="2233.2" y="428.6" width="1.7" height="1.7"/><rect x="2227.9" y="389.7" width="2.4" height="2.4"/><rect x="2245.2" y="411.4" width="1.3" height="1.3"/><rect x="2259.1" y="422.4" width="1.9" height="1.9"/><rect x="2233.1" y="409.1" width="1.8" height="1.8"/><rect x="2226.4" y="414.6" width="1.6" height="1.6"/><rect x="2257.3" y="392.1" width="2.5" height="2.5"/><rect x="2243.3" y="402.2" width="1.7" height="1.7"/><rect x="2248.7" y="399.2" width="1.9" height="1.9"/><rect x="2248.2" y="427.4" width="1.5" height="1.5"/><rect x="2230.2" y="423.0" width="1.1" height="1.1"/><rect x="2254.9" y="408.1" width="1.7" height="1.7"/><rect x="2251.5" y="414.6" width="2.3" height="2.3"/><rect x="2259.9" y="392.6" width="2.3" height="2.3"/><rect x="2252.4" y="412.2" width="1.7" height="1.7"/><rect x="2262.4" y="411.0" width="1.4" height="1.4"/><rect x="2246.5" y="390.7" width="1.4" height="1.4"/><rect x="2236.6" y="417.8" width="1.3" height="1.3"/><rect x="2254.8" y="408.4" width="1.3" height="1.3"/><rect x="2242.7" y="427.2" width="2.2" height="2.2"/><rect x="2242.4" y="408.2" width="2.3" height="2.3"/><rect x="2243.0" y="411.0" width="2.3" height="2.3"/><rect x="2249.5" y="403.4" width="1.9" height="1.9"/><rect x="2253.8" y="398.7" width="1.5" height="1.5"/><rect x="2243.9" y="408.5" width="2.5" height="2.5"/><rect x="2245.4" y="402.4" width="2.1" height="2.1"/><rect x="2249.9" y="425.1" width="1.6" height="1.6"/><rect x="2238.6" y="394.3" width="1.0" height="1.0"/><rect x="2228.1" y="400.5" width="1.0" height="1.0"/><rect x="2251.0" y="409.4" width="2.2" height="2.2"/><rect x="2255.3" y="405.9" width="2.4" height="2.4"/><rect x="2241.3" y="399.9" width="1.7" height="1.7"/><rect x="2250.6" y="396.9" width="1.8" height="1.8"/><rect x="2242.5" y="402.9" width="1.7" height="1.7"/><rect x="2228.6" y="405.7" width="2.1" height="2.1"/><rect x="2241.6" y="420.2" width="1.7" height="1.7"/><rect x="2258.9" y="419.4" width="2.6" height="2.6"/><rect x="2232.8" y="403.5" width="1.6" height="1.6"/><rect x="2233.4" y="410.6" width="1.4" height="1.4"/><rect x="2253.0" y="404.3" width="1.3" height="1.3"/><rect x="2243.1" y="407.4" width="1.5" height="1.5"/><rect x="2224.5" y="400.1" width="1.4" height="1.4"/><rect x="2265.4" y="415.1" width="0.9" height="0.9"/><rect x="2231.5" y="414.3" width="2.7" height="2.7"/><rect x="2238.9" y="413.2" width="1.4" height="1.4"/><rect x="2240.0" y="410.9" width="2.5" height="2.5"/><rect x="2224.9" y="406.1" width="1.4" height="1.4"/><rect x="2232.2" y="388.4" width="1.3" height="1.3"/><rect x="2251.2" y="405.3" width="2.2" height="2.2"/><rect x="2255.0" y="403.1" width="2.6" height="2.6"/><rect x="2233.9" y="414.9" width="2.6" height="2.6"/><rect x="2241.7" y="406.4" width="1.2" height="1.2"/><rect x="2233.9" y="405.5" width="1.0" height="1.0"/><rect x="2246.9" y="399.1" width="2.5" height="2.5"/><rect x="2239.5" y="411.8" width="1.7" height="1.7"/><rect x="2253.5" y="388.1" width="1.9" height="1.9"/><rect x="2243.2" y="421.5" width="1.4" height="1.4"/><rect x="2243.1" y="407.9" width="0.9" height="0.9"/><rect x="2260.8" y="399.7" width="1.3" height="1.3"/><rect x="2242.1" y="406.5" width="2.4" height="2.4"/><rect x="2229.5" y="395.8" width="1.7" height="1.7"/><rect x="2224.8" y="415.7" width="1.5" height="1.5"/><rect x="2246.7" y="409.4" width="2.6" height="2.6"/><rect x="2242.9" y="409.9" width="1.9" height="1.9"/><rect x="2251.3" y="416.1" width="2.3" height="2.3"/><rect x="2244.5" y="419.1" width="2.6" height="2.6"/><rect x="2257.8" y="392.0" width="1.0" height="1.0"/><rect x="2257.8" y="405.1" width="1.2" height="1.2"/><rect x="2247.3" y="407.2" width="2.7" height="2.7"/><rect x="2246.0" y="408.1" width="1.8" height="1.8"/><rect x="2231.5" y="398.0" width="2.4" height="2.4"/><rect x="2257.5" y="419.1" width="1.5" height="1.5"/><rect x="2258.8" y="403.1" width="2.1" height="2.1"/><rect x="2258.3" y="424.0" width="1.4" height="1.4"/><rect x="2246.3" y="418.7" width="2.3" height="2.3"/><rect x="2237.7" y="419.0" width="2.0" height="2.0"/><rect x="2243.4" y="411.5" width="1.6" height="1.6"/><rect x="2239.3" y="390.8" width="1.3" height="1.3"/><rect x="2232.0" y="390.4" width="2.2" height="2.2"/><rect x="2244.0" y="409.1" width="2.7" height="2.7"/><rect x="2241.3" y="399.9" width="2.2" height="2.2"/><rect x="2229.1" y="399.8" width="1.5" height="1.5"/><rect x="2238.1" y="398.4" width="1.6" height="1.6"/><rect x="2235.0" y="424.1" width="2.4" height="2.4"/><rect x="2242.6" y="410.2" width="1.4" height="1.4"/><rect x="2243.7" y="397.6" width="0.9" height="0.9"/><rect x="2249.8" y="397.8" width="1.0" height="1.0"/><rect x="2243.1" y="394.1" width="2.4" height="2.4"/><rect x="2253.6" y="390.1" width="2.5" height="2.5"/><rect x="2228.3" y="420.9" width="1.8" height="1.8"/><rect x="2239.5" y="402.3" width="2.0" height="2.0"/><rect x="2262.2" y="417.0" width="1.2" height="1.2"/><rect x="2224.5" y="398.8" width="2.4" height="2.4"/><rect x="2250.4" y="398.4" width="1.0" height="1.0"/><rect x="2252.0" y="406.8" width="2.5" height="2.5"/><rect x="2233.2" y="414.0" width="1.9" height="1.9"/><rect x="2224.7" y="402.1" width="2.0" height="2.0"/><rect x="2250.3" y="419.8" width="1.1" height="1.1"/><rect x="2246.6" y="403.2" width="1.6" height="1.6"/><rect x="2235.2" y="402.4" width="2.5" height="2.5"/><rect x="2245.8" y="398.5" width="1.7" height="1.7"/><rect x="2242.3" y="394.1" width="2.0" height="2.0"/><rect x="2235.6" y="420.3" width="2.0" height="2.0"/><rect x="2251.3" y="401.8" width="2.3" height="2.3"/><rect x="2245.2" y="415.8" width="1.3" height="1.3"/><rect x="2246.2" y="406.2" width="1.4" height="1.4"/><rect x="2225.7" y="411.1" width="2.1" height="2.1"/><rect x="2251.1" y="415.1" width="2.2" height="2.2"/><rect x="2245.8" y="410.7" width="2.4" height="2.4"/><rect x="2246.1" y="407.6" width="1.2" height="1.2"/><rect x="2248.3" y="399.2" width="1.7" height="1.7"/><rect x="2222.3" y="402.1" width="1.0" height="1.0"/><rect x="2247.2" y="418.0" width="2.1" height="2.1"/><rect x="2251.2" y="416.4" width="1.9" height="1.9"/><rect x="2251.9" y="411.3" width="1.0" height="1.0"/><rect x="2243.7" y="407.3" width="1.2" height="1.2"/><rect x="2238.1" y="403.1" width="1.9" height="1.9"/><rect x="2230.4" y="427.6" width="1.9" height="1.9"/><rect x="2239.9" y="412.1" width="1.8" height="1.8"/><rect x="2245.9" y="389.7" width="2.2" height="2.2"/><rect x="2220.8" y="405.3" width="1.6" height="1.6"/><rect x="2221.2" y="400.9" width="2.3" height="2.3"/><rect x="2223.8" y="410.8" width="2.3" height="2.3"/><rect x="2240.3" y="418.2" width="2.3" height="2.3"/><rect x="2236.4" y="414.6" width="1.9" height="1.9"/><rect x="2250.1" y="411.1" width="2.7" height="2.7"/><rect x="2243.5" y="427.6" width="0.9" height="0.9"/><rect x="2238.5" y="420.4" width="1.5" height="1.5"/><rect x="2265.0" y="399.5" width="1.4" height="1.4"/><rect x="2257.8" y="424.6" width="2.3" height="2.3"/><rect x="2241.2" y="407.3" width="0.9" height="0.9"/><rect x="2236.8" y="391.5" width="1.7" height="1.7"/><rect x="2239.3" y="414.6" width="1.6" height="1.6"/><rect x="2229.5" y="415.4" width="1.6" height="1.6"/><rect x="2239.8" y="413.3" width="2.1" height="2.1"/><rect x="2248.6" y="405.4" width="2.3" height="2.3"/><rect x="2239.1" y="402.1" width="1.1" height="1.1"/><rect x="2245.7" y="403.5" width="1.1" height="1.1"/><rect x="2260.3" y="418.4" width="1.6" height="1.6"/><rect x="2251.5" y="407.7" width="1.8" height="1.8"/><rect x="2238.6" y="408.3" width="2.4" height="2.4"/><rect x="2240.7" y="400.1" width="1.5" height="1.5"/><rect x="2243.3" y="408.5" width="2.0" height="2.0"/><rect x="2240.8" y="424.3" width="2.4" height="2.4"/><rect x="2239.8" y="415.1" width="1.6" height="1.6"/><rect x="2241.5" y="407.9" width="1.6" height="1.6"/><rect x="2241.9" y="411.0" width="2.4" height="2.4"/><rect x="2239.0" y="395.3" width="1.0" height="1.0"/><rect x="2241.8" y="397.2" width="2.5" height="2.5"/><rect x="2239.0" y="401.9" width="2.3" height="2.3"/><rect x="2235.0" y="402.2" width="2.3" height="2.3"/><rect x="2241.1" y="411.6" width="1.0" height="1.0"/><rect x="2237.3" y="402.4" width="1.2" height="1.2"/><rect x="2261.7" y="413.3" width="1.4" height="1.4"/><rect x="2257.1" y="390.7" width="2.4" height="2.4"/><rect x="2247.0" y="430.1" width="2.0" height="2.0"/><rect x="2255.9" y="389.4" width="1.5" height="1.5"/><rect x="2227.8" y="423.1" width="1.4" height="1.4"/><rect x="2244.5" y="408.5" width="1.9" height="1.9"/><rect x="2235.3" y="429.0" width="0.9" height="0.9"/><rect x="2228.9" y="418.4" width="2.0" height="2.0"/><rect x="2251.6" y="393.2" width="2.5" height="2.5"/><rect x="2264.0" y="403.4" width="2.0" height="2.0"/><rect x="2232.0" y="415.9" width="1.3" height="1.3"/><rect x="2242.9" y="421.3" width="1.7" height="1.7"/><rect x="2241.0" y="409.5" width="2.7" height="2.7"/><rect x="2237.0" y="418.8" width="1.5" height="1.5"/><rect x="2225.0" y="401.0" width="2.6" height="2.6"/><rect x="2225.2" y="393.9" width="1.6" height="1.6"/><rect x="2233.9" y="409.2" width="2.6" height="2.6"/><rect x="2248.0" y="412.5" width="2.3" height="2.3"/><rect x="2243.5" y="410.0" width="1.6" height="1.6"/><rect x="2231.3" y="410.3" width="1.3" height="1.3"/><rect x="2238.5" y="414.4" width="1.2" height="1.2"/><rect x="2236.5" y="407.3" width="1.2" height="1.2"/><rect x="2262.9" y="398.3" width="1.6" height="1.6"/><rect x="2240.0" y="407.0" width="0.9" height="0.9"/><rect x="2220.5" y="405.7" width="1.0" height="1.0"/><rect x="2224.4" y="413.1" width="0.9" height="0.9"/><rect x="2236.7" y="403.6" width="2.3" height="2.3"/><rect x="2252.8" y="388.2" width="2.3" height="2.3"/><rect x="2257.6" y="416.4" width="1.9" height="1.9"/><rect x="2241.4" y="413.4" width="1.8" height="1.8"/><rect x="2233.4" y="412.8" width="2.6" height="2.6"/><rect x="2245.9" y="428.5" width="1.2" height="1.2"/><rect x="2238.9" y="396.4" width="1.6" height="1.6"/><rect x="2239.0" y="408.2" width="1.3" height="1.3"/><rect x="2238.3" y="410.7" width="2.4" height="2.4"/><rect x="2237.4" y="392.5" width="2.2" height="2.2"/><rect x="2243.6" y="408.0" width="1.0" height="1.0"/><rect x="2253.0" y="398.9" width="2.7" height="2.7"/><rect x="2238.5" y="417.1" width="2.1" height="2.1"/><rect x="2250.0" y="398.0" width="1.8" height="1.8"/><rect x="2238.9" y="413.2" width="2.5" height="2.5"/><rect x="2253.1" y="400.9" width="1.2" height="1.2"/><rect x="2251.9" y="398.5" width="2.2" height="2.2"/><rect x="2240.9" y="409.0" width="2.2" height="2.2"/><rect x="2261.2" y="421.6" width="1.2" height="1.2"/><rect x="2243.2" y="407.8" width="1.3" height="1.3"/><rect x="2241.4" y="405.0" width="1.1" height="1.1"/><rect x="2243.9" y="407.8" width="1.8" height="1.8"/><rect x="2246.2" y="426.2" width="2.1" height="2.1"/><rect x="2220.8" y="406.9" width="2.6" height="2.6"/><rect x="2236.5" y="425.7" width="2.1" height="2.1"/><rect x="2250.8" y="425.6" width="1.0" height="1.0"/><rect x="2233.1" y="388.1" width="2.1" height="2.1"/><rect x="2237.8" y="391.7" width="1.6" height="1.6"/><rect x="2251.4" y="414.3" width="1.5" height="1.5"/><rect x="2251.5" y="387.7" width="2.6" height="2.6"/><rect x="2232.4" y="426.5" width="2.5" height="2.5"/><rect x="2257.6" y="409.4" width="1.1" height="1.1"/></g><g fill="#000" opacity="0.8"><rect x="1957.9" y="469.9" width="2.4" height="2.4"/><rect x="1953.0" y="470.8" width="2.0" height="2.0"/><rect x="1947.1" y="467.6" width="1.3" height="1.3"/><rect x="1956.8" y="468.3" width="3.0" height="3.0"/><rect x="1955.5" y="473.8" width="2.3" height="2.3"/><rect x="1959.5" y="462.9" width="1.1" height="1.1"/><rect x="1942.6" y="474.0" width="2.3" height="2.3"/><rect x="1950.6" y="467.7" width="2.7" height="2.7"/><rect x="1938.3" y="472.0" width="2.2" height="2.2"/><rect x="1943.6" y="471.6" width="1.1" height="1.1"/><rect x="1964.8" y="465.2" width="2.3" height="2.3"/><rect x="1941.6" y="463.1" width="1.9" height="1.9"/><rect x="1950.6" y="473.5" width="3.0" height="3.0"/><rect x="1960.0" y="463.1" width="1.3" height="1.3"/><rect x="1947.7" y="470.5" width="2.1" height="2.1"/><rect x="1959.7" y="464.9" width="2.2" height="2.2"/><rect x="1946.3" y="468.8" width="1.5" height="1.5"/><rect x="1966.5" y="467.2" width="2.3" height="2.3"/><rect x="1948.0" y="465.9" width="1.0" height="1.0"/><rect x="1950.6" y="468.0" width="1.4" height="1.4"/><rect x="1961.2" y="467.4" width="1.4" height="1.4"/><rect x="1950.5" y="468.1" width="1.0" height="1.0"/><rect x="1954.7" y="470.4" width="1.3" height="1.3"/><rect x="1951.6" y="473.3" width="1.3" height="1.3"/><rect x="1959.5" y="472.8" width="1.6" height="1.6"/><rect x="1945.7" y="466.0" width="2.4" height="2.4"/><rect x="1955.9" y="468.2" width="2.7" height="2.7"/><rect x="1946.8" y="473.3" width="1.4" height="1.4"/><rect x="1956.8" y="470.4" width="1.9" height="1.9"/><rect x="1960.2" y="469.0" width="1.8" height="1.8"/><rect x="1941.0" y="472.9" width="2.8" height="2.8"/><rect x="1944.5" y="469.6" width="2.5" height="2.5"/><rect x="1950.5" y="463.5" width="2.2" height="2.2"/><rect x="1942.6" y="473.1" width="2.2" height="2.2"/><rect x="1954.1" y="465.8" width="1.1" height="1.1"/><rect x="1957.6" y="464.2" width="2.6" height="2.6"/><rect x="1949.7" y="461.6" width="1.7" height="1.7"/><rect x="1957.9" y="464.0" width="1.8" height="1.8"/><rect x="1951.2" y="468.9" width="1.5" height="1.5"/><rect x="1947.0" y="470.8" width="2.2" height="2.2"/></g><g fill="#000" opacity="0.8"><rect x="2177.1" y="465.1" width="2.3" height="2.3"/><rect x="2178.8" y="466.3" width="2.1" height="2.1"/><rect x="2170.8" y="463.6" width="2.3" height="2.3"/><rect x="2160.3" y="465.6" width="1.9" height="1.9"/><rect x="2174.8" y="461.3" width="2.1" height="2.1"/><rect x="2161.1" y="466.0" width="2.0" height="2.0"/><rect x="2181.1" y="464.9" width="2.0" height="2.0"/><rect x="2169.3" y="465.2" width="2.8" height="2.8"/><rect x="2169.6" y="465.8" width="1.0" height="1.0"/><rect x="2175.5" y="462.0" width="2.2" height="2.2"/></g><path d="M1995,454 l7,14" stroke="#666" stroke-width="2"/><rect x="2090" y="460" width="3" height="3" fill="#000"/><rect x="2220" y="462" width="3" height="3" fill="#000"/><rect x="2238" y="462" width="3" height="3" fill="#000"/><rect x="2256" y="464" width="3" height="3" fill="#000"/><rect x="2194" y="288" width="8" height="8" fill="#6a7ff5" opacity="0.55"/><path d="M2192,290 h9 M2196,286 v9" stroke="#111" stroke-width="2"/><rect x="2269" y="288" width="8" height="8" fill="#6a7ff5" opacity="0.55"/><path d="M2267,290 h9 M2271,286 v9" stroke="#111" stroke-width="2"/><rect x="1969" y="363" width="8" height="8" fill="#6a7ff5" opacity="0.55"/><path d="M1967,365 h9 M1971,361 v9" stroke="#111" stroke-width="2"/><rect x="2044" y="363" width="8" height="8" fill="#6a7ff5" opacity="0.55"/><path d="M2042,365 h9 M2046,361 v9" stroke="#111" stroke-width="2"/><rect x="2119" y="363" width="8" height="8" fill="#6a7ff5" opacity="0.55"/><path d="M2117,365 h9 M2121,361 v9" stroke="#111" stroke-width="2"/><rect x="2194" y="363" width="8" height="8" fill="#6a7ff5" opacity="0.55"/><path d="M2192,365 h9 M2196,361 v9" stroke="#111" stroke-width="2"/><rect x="2269" y="363" width="8" height="8" fill="#6a7ff5" opacity="0.55"/><path d="M2267,365 h9 M2271,361 v9" stroke="#111" stroke-width="2"/><rect x="1969" y="438" width="8" height="8" fill="#6a7ff5" opacity="0.55"/><path d="M1967,440 h9 M1971,436 v9" stroke="#111" stroke-width="2"/><rect x="2044" y="438" width="8" height="8" fill="#f58a8a" opacity="0.55"/><path d="M2042,440 h9 M2046,436 v9" stroke="#111" stroke-width="2"/><rect x="2119" y="438" width="8" height="8" fill="#f58a8a" opacity="0.55"/><path d="M2117,440 h9 M2121,436 v9" stroke="#111" stroke-width="2"/><rect x="2194" y="438" width="8" height="8" fill="#f58a8a" opacity="0.55"/><path d="M2192,440 h9 M2196,436 v9" stroke="#111" stroke-width="2"/><rect x="2269" y="438" width="8" height="8" fill="#f58a8a" opacity="0.55"/><path d="M2267,440 h9 M2271,436 v9" stroke="#111" stroke-width="2"/>
<path d="M2300,489 h17 l-8.5,9.5 Z" fill="#bdbdbd"/>
<path d="M2316,531 h12 l-6,-7 Z M2316,562 h12 l-6,7 Z" fill="#d0d0d0"/>
<g fill="#bdbdbd"><rect x="1926" y="594" width="18" height="4"/><rect x="1926" y="603" width="7" height="4"/><rect x="1926" y="611" width="7" height="4"/><rect x="1926" y="620" width="27" height="4"/></g><path d="M1938,612 L1958,592" stroke="#bdbdbd" stroke-width="5"/><path d="M1956,589 l3,-3 4,4 -3,3 Z" fill="#bdbdbd"/>
<path d="M2017,606 v17 h19 v-26 l-7,-7 h-6" fill="none" stroke="#bdbdbd" stroke-width="3"/><path d="M2012,595 h12 M2018,589 v12" stroke="#bdbdbd" stroke-width="4"/>
<rect x="2101" y="593" width="20" height="15" fill="none" stroke="#bdbdbd" stroke-width="2.5"/><path d="M2110,611 v7 h20 v-14 h-6" fill="none" stroke="#bdbdbd" stroke-width="2.5"/>
<defs><pattern id="chk" width="4" height="4" patternUnits="userSpaceOnUse"><rect width="4" height="4" fill="#8a8a8a"/><rect width="2" height="2" fill="#b5b5b5"/><rect x="2" y="2" width="2" height="2" fill="#b5b5b5"/></pattern></defs>
<rect x="2184" y="589" width="36" height="36" fill="url(#chk)"/><path d="M2191,596 L2213,618 M2213,596 L2191,618" stroke="#454745" stroke-width="7"/><path d="M2191,596 L2213,618 M2213,596 L2191,618" stroke="#bdbdbd" stroke-width="4"/>
<path d="M2302,596 a13,13 0 1 0 2,14" fill="none" stroke="#bdbdbd" stroke-width="5"/><path d="M2296,603 l12,-14 v14 Z" fill="#bdbdbd"/>
<g fill="#111"><circle cx="2087.0" cy="645" r="1.3"/><circle cx="2097.6" cy="645" r="1.3"/><circle cx="2108.2" cy="645" r="1.3"/><circle cx="2118.8" cy="645" r="1.3"/><circle cx="2129.4" cy="645" r="1.3"/><circle cx="2140.0" cy="645" r="1.3"/><circle cx="2150.6" cy="645" r="1.3"/><circle cx="2161.2" cy="645" r="1.3"/></g>
<g fill="#111"><circle cx="1894" cy="576.0" r="1.3"/><circle cx="1894" cy="586.6" r="1.3"/><circle cx="1894" cy="597.2" r="1.3"/><circle cx="1894" cy="607.8" r="1.3"/><circle cx="1894" cy="618.4" r="1.3"/><circle cx="1894" cy="629.0" r="1.3"/></g>
<g fill="#bdbdbd"><path d="M1912,656 h24 l-7,8 h-24 Z"/><path d="M1910,669 h24 l-7,8 h-24 Z"/><path d="M1908,682 h24 l-7,8 h-24 Z"/></g>
<rect x="2025" y="658" width="33" height="32" fill="none" stroke="#bdbdbd" stroke-width="2.5"/><g fill="#bdbdbd"><rect x="2031" y="664" width="4" height="21" fill="#7a7a7a"/><rect x="2039" y="664" width="4" height="21"/><rect x="2047" y="664" width="4" height="21"/></g>
<path d="M2176,667 h31 M2180,688 c4,-14 20,-14 24,0" fill="none" stroke="#bdbdbd" stroke-width="4"/><rect x="2174" y="662" width="8" height="8" fill="#bdbdbd"/><rect x="2200" y="662" width="8" height="8" fill="#bdbdbd"/>
<path d="M2314,672.5 l13,-7.5 v15 Z" fill="#bdbdbd"/>
<path d="M2194,724 h19 l-9.5,11 Z" fill="#bdbdbd"/>
<path d="M2255.0,720.2 A11.5,11.5 0 1 1 2260.7,736.7" fill="none" stroke="#bdbdbd" stroke-width="3.6"/><path d="M2245.5,722.0 L2262.5,722.0 L2254.0,730.5 Z" fill="#bdbdbd"/><circle cx="2255.0" cy="738.3" r="5.3" fill="#bdbdbd"/>
<path d="M2297,724 h19 l-9.5,11 Z" fill="#bdbdbd"/>
<path d="M2314.5,780.8 h12 l-6,-7 Z M2314.5,801.2 h12 l-6,7 Z" fill="#d0d0d0"/>
<path d="M1986,852 L2002,838" stroke="#bdbdbd" stroke-width="4" stroke-linecap="round"/><path d="M1985,850 c-6,4 -6,12 -14,19 c10,0 18,-4 18,-14 Z" fill="#bdbdbd"/>
<path d="M2045,838 v32 M2029,853 h32" stroke="#bdbdbd" stroke-width="3.5"/><path d="M2045,836 l-6,7 h12 Z M2045,871 l-6,-7 h12 Z M2027,853 l7,-6 v12 Z M2063,853 l-7,-6 v12 Z" fill="#bdbdbd"/>
<rect x="2088" y="836" width="7" height="7" fill="#c8c8c8"/><rect x="2088" y="843" width="7" height="7" fill="#7a7a7a"/><rect x="2088" y="850" width="7" height="7" fill="#c8c8c8"/><rect x="2088" y="857" width="7" height="7" fill="#7a7a7a"/><rect x="2088" y="864" width="7" height="7" fill="#c8c8c8"/><rect x="2095" y="836" width="7" height="7" fill="#7a7a7a"/><rect x="2095" y="843" width="7" height="7" fill="#c8c8c8"/><rect x="2095" y="850" width="7" height="7" fill="#7a7a7a"/><rect x="2095" y="857" width="7" height="7" fill="#c8c8c8"/><rect x="2095" y="864" width="7" height="7" fill="#7a7a7a"/><rect x="2102" y="836" width="7" height="7" fill="#c8c8c8"/><rect x="2102" y="843" width="7" height="7" fill="#7a7a7a"/><rect x="2102" y="850" width="7" height="7" fill="#c8c8c8"/><rect x="2102" y="857" width="7" height="7" fill="#7a7a7a"/><rect x="2102" y="864" width="7" height="7" fill="#c8c8c8"/><rect x="2109" y="836" width="7" height="7" fill="#7a7a7a"/><rect x="2109" y="843" width="7" height="7" fill="#c8c8c8"/><rect x="2109" y="850" width="7" height="7" fill="#7a7a7a"/><rect x="2109" y="857" width="7" height="7" fill="#c8c8c8"/><rect x="2109" y="864" width="7" height="7" fill="#7a7a7a"/><rect x="2116" y="836" width="7" height="7" fill="#c8c8c8"/><rect x="2116" y="843" width="7" height="7" fill="#7a7a7a"/><rect x="2116" y="850" width="7" height="7" fill="#c8c8c8"/><rect x="2116" y="857" width="7" height="7" fill="#7a7a7a"/><rect x="2116" y="864" width="7" height="7" fill="#c8c8c8"/>
<path d="M1916,912 c12,-20 32,-20 42,0 c-10,20 -30,20 -42,0 Z" fill="none" stroke="#bdbdbd" stroke-width="3.5"/><circle cx="1936" cy="912" r="6" fill="none" stroke="#bdbdbd" stroke-width="3.5"/>
<g transform="translate(2046.6,883) scale(0.05)"><use href="#hw" stroke="#333" stroke-width="34"/></g>
<g fill="#bdbdbd"><rect x="1912" y="1070" width="16" height="4"/><rect x="1918" y="1064" width="4" height="16"/><rect x="1965" y="1068" width="36" height="12"/><rect x="2130" y="1070" width="20" height="10" fill="none" stroke="#bdbdbd" stroke-width="3"/><rect x="2233" y="1068" width="20" height="12"/><rect x="2288" y="1068" width="36" height="12"/></g>
<path d="M2027,1080 l7,-8 7,8 M2062,1080 l7,-6 M2081,1080 l10,-8 M2187,1070 l5,-5 5,5 -5,5 Z" fill="none" stroke="#bdbdbd" stroke-width="3"/></svg>
<div class="t" style="left:745.00px;top:10.00px;font-size:19.5px;font-weight:bold;font-style:normal;color:#f2f5fa;font-family:'Liberation Sans';transform:scaleX(1.1470);text-shadow:1px 1px 1px #4a6590;">*[Untitled]-1.0 (RGB color 8-bit gamma integer, GIMP built-in sRGB, 1 layer) 1920x1080 - GIMP</div>
<div class="t" style="left:152.73px;top:55.00px;font-size:22px;font-weight:normal;font-style:normal;color:#dadada;font-family:'Liberation Sans';transform:scaleX(1.1333);">File</div>
<div class="t" style="left:216.68px;top:55.00px;font-size:22px;font-weight:normal;font-style:normal;color:#dadada;font-family:'Liberation Sans';transform:scaleX(1.1583);">Edit</div>
<div class="t" style="left:285.24px;top:55.00px;font-size:22px;font-weight:normal;font-style:normal;color:#dadada;font-family:'Liberation Sans';transform:scaleX(1.1567);">Select</div>
<div class="t" style="left:381.50px;top:55.00px;font-size:22px;font-weight:normal;font-style:normal;color:#dadada;font-family:'Liberation Sans';transform:scaleX(1.1362);">View</div>
<div class="t" style="left:459.28px;top:55.00px;font-size:22px;font-weight:normal;font-style:normal;color:#dadada;font-family:'Liberation Sans';transform:scaleX(1.1603);">Image</div>
<div class="t" style="left:553.26px;top:55.00px;font-size:22px;font-weight:normal;font-style:normal;color:#dadada;font-family:'Liberation Sans';transform:scaleX(1.1698);">Layer</div>
<div class="t" style="left:642.90px;top:55.00px;font-size:22px;font-weight:normal;font-style:normal;color:#dadada;font-family:'Liberation Sans';transform:scaleX(1.1016);">Colors</div>
<div class="t" style="left:737.44px;top:55.00px;font-size:22px;font-weight:normal;font-style:normal;color:#dadada;font-family:'Liberation Sans';transform:scaleX(1.0640);">Tools</div>
<div class="t" style="left:816.51px;top:55.00px;font-size:22px;font-weight:normal;font-style:normal;color:#dadada;font-family:'Liberation Sans';transform:scaleX(1.1439);">Filters</div>
<div class="t" style="left:911.20px;top:55.00px;font-size:22px;font-weight:normal;font-style:normal;color:#dadada;font-family:'Liberation Sans';transform:scaleX(1.0831);">Windows</div>
<div class="t" style="left:1032.30px;top:55.00px;font-size:22px;font-weight:normal;font-style:normal;color:#dadada;font-family:'Liberation Sans';transform:scaleX(1.1976);">Help</div>
<div class="t" style="left:145.66px;top:652.50px;font-size:22px;font-weight:bold;font-style:normal;color:#e2e2e2;font-family:'Liberation Sans';transform:scaleX(1.0371);">Pencil</div>
<div class="t" style="left:160.42px;top:694.00px;font-size:22px;font-weight:normal;font-style:normal;color:#cbcbcb;font-family:'Liberation Sans';transform:scaleX(1.0423);">Mode</div>
<div class="t" style="left:268.01px;top:694.00px;font-size:22px;font-weight:normal;font-style:normal;color:#cbcbcb;font-family:'Liberation Sans';transform:scaleX(1.0956);">Normal</div>
<div class="t" style="left:149.32px;top:762.00px;font-size:22px;font-weight:normal;font-style:normal;color:#cbcbcb;font-family:'Liberation Sans';transform:scaleX(1.0808);">Opacity</div>
<div class="t" style="left:421.82px;top:762.00px;font-size:22px;font-weight:normal;font-style:normal;color:#cbcbcb;font-family:'Liberation Sans';transform:scaleX(1.0885);">100.0</div>
<div class="t" style="left:228.10px;top:816.00px;font-size:22px;font-weight:normal;font-style:normal;color:#cbcbcb;font-family:'Liberation Sans';transform:scaleX(1.0481);">Brush</div>
<div class="t" style="left:237.23px;top:860.00px;font-size:22px;font-weight:normal;font-style:normal;color:#cbcbcb;font-family:'Liberation Sans';transform:scaleX(1.0656);">2. Hardness 050</div>
<div class="t" style="left:149.37px;top:921.00px;font-size:22px;font-weight:normal;font-style:normal;color:#cbcbcb;font-family:'Liberation Sans';transform:scaleX(1.0268);">Size</div>
<div class="t" style="left:307.20px;top:921.00px;font-size:22px;font-weight:normal;font-style:normal;color:#cbcbcb;font-family:'Liberation Sans';transform:scaleX(1.1019);">51.00</div>
<div class="t" style="left:150.40px;top:991.00px;font-size:22px;font-weight:normal;font-style:normal;color:#cbcbcb;font-family:'Liberation Sans';transform:scaleX(1.0492);">Aspect Ratio</div>
<div class="t" style="left:320.70px;top:991.00px;font-size:22px;font-weight:normal;font-style:normal;color:#cbcbcb;font-family:'Liberation Sans';transform:scaleX(1.0951);">0.00</div>
<div class="t" style="left:702.10px;top:183.50px;font-size:15px;font-weight:normal;font-style:normal;color:#c4c4c4;font-family:'Liberation Sans';transform:scaleX(1.1042);letter-spacing:-1px;-webkit-text-stroke:0;">250</div>
<div class="t" style="left:886.00px;top:183.50px;font-size:15px;font-weight:normal;font-style:normal;color:#c4c4c4;font-family:'Liberation Sans';transform:scaleX(1.1042);letter-spacing:-1px;-webkit-text-stroke:0;">500</div>
<div class="t" style="left:1069.90px;top:183.50px;font-size:15px;font-weight:normal;font-style:normal;color:#c4c4c4;font-family:'Liberation Sans';transform:scaleX(1.1042);letter-spacing:-1px;-webkit-text-stroke:0;">750</div>
<div class="t" style="left:1253.81px;top:183.50px;font-size:15px;font-weight:normal;font-style:normal;color:#c4c4c4;font-family:'Liberation Sans';transform:scaleX(1.0938);letter-spacing:-1px;-webkit-text-stroke:0;">1000</div>
<div class="t" style="left:1437.71px;top:183.50px;font-size:15px;font-weight:normal;font-style:normal;color:#c4c4c4;font-family:'Liberation Sans';transform:scaleX(1.0938);letter-spacing:-1px;-webkit-text-stroke:0;">1250</div>
<div class="t" style="left:1621.61px;top:183.50px;font-size:15px;font-weight:normal;font-style:normal;color:#c4c4c4;font-family:'Liberation Sans';transform:scaleX(1.0938);letter-spacing:-1px;-webkit-text-stroke:0;">1500</div>
<div class="t" style="left:1805.51px;top:183.50px;font-size:15px;font-weight:normal;font-style:normal;color:#c4c4c4;font-family:'Liberation Sans';transform:scaleX(1.0938);letter-spacing:-1px;-webkit-text-stroke:0;">1750</div>
<div class="t" style="left:568.17px;top:221.50px;font-size:13px;font-weight:normal;font-style:normal;color:#bdbdbd;font-family:'Liberation Sans';transform:scaleX(1.3333);-webkit-text-stroke:0;">0</div>
<div class="t" style="left:568.17px;top:403.00px;font-size:13px;font-weight:normal;font-style:normal;color:#bdbdbd;font-family:'Liberation Sans';transform:scaleX(1.3333);-webkit-text-stroke:0;">2</div>
<div class="t" style="left:568.17px;top:420.00px;font-size:13px;font-weight:normal;font-style:normal;color:#bdbdbd;font-family:'Liberation Sans';transform:scaleX(1.3333);-webkit-text-stroke:0;">5</div>
<div class="t" style="left:568.17px;top:437.00px;font-size:13px;font-weight:normal;font-style:normal;color:#bdbdbd;font-family:'Liberation Sans';transform:scaleX(1.3333);-webkit-text-stroke:0;">0</div>
<div class="t" style="left:568.17px;top:587.00px;font-size:13px;font-weight:normal;font-style:normal;color:#bdbdbd;font-family:'Liberation Sans';transform:scaleX(1.3333);-webkit-text-stroke:0;">5</div>
<div class="t" style="left:568.17px;top:604.00px;font-size:13px;font-weight:normal;font-style:normal;color:#bdbdbd;font-family:'Liberation Sans';transform:scaleX(1.3333);-webkit-text-stroke:0;">0</div>
<div class="t" style="left:568.17px;top:621.00px;font-size:13px;font-weight:normal;font-style:normal;color:#bdbdbd;font-family:'Liberation Sans';transform:scaleX(1.3333);-webkit-text-stroke:0;">0</div>
<div class="t" style="left:568.17px;top:770.00px;font-size:13px;font-weight:normal;font-style:normal;color:#bdbdbd;font-family:'Liberation Sans';transform:scaleX(1.3333);-webkit-text-stroke:0;">7</div>
<div class="t" style="left:568.17px;top:787.00px;font-size:13px;font-weight:normal;font-style:normal;color:#bdbdbd;font-family:'Liberation Sans';transform:scaleX(1.3333);-webkit-text-stroke:0;">5</div>
<div class="t" style="left:568.17px;top:804.00px;font-size:13px;font-weight:normal;font-style:normal;color:#bdbdbd;font-family:'Liberation Sans';transform:scaleX(1.3333);-webkit-text-stroke:0;">0</div>
<div class="t" style="left:568.17px;top:954.00px;font-size:13px;font-weight:normal;font-style:normal;color:#bdbdbd;font-family:'Liberation Sans';transform:scaleX(1.3333);-webkit-text-stroke:0;">1</div>
<div class="t" style="left:568.17px;top:971.00px;font-size:13px;font-weight:normal;font-style:normal;color:#bdbdbd;font-family:'Liberation Sans';transform:scaleX(1.3333);-webkit-text-stroke:0;">0</div>
<div class="t" style="left:568.17px;top:988.00px;font-size:13px;font-weight:normal;font-style:normal;color:#bdbdbd;font-family:'Liberation Sans';transform:scaleX(1.3333);-webkit-text-stroke:0;">0</div>
<div class="t" style="left:568.17px;top:1005.00px;font-size:13px;font-weight:normal;font-style:normal;color:#bdbdbd;font-family:'Liberation Sans';transform:scaleX(1.3333);-webkit-text-stroke:0;">0</div>
<div class="t" style="left:599.32px;top:1074.00px;font-size:22px;font-weight:normal;font-style:normal;color:#cbcbcb;font-family:'Liberation Sans';transform:scaleX(1.0895);">1692, 744</div>
<div class="t" style="left:849.10px;top:1074.00px;font-size:22px;font-weight:normal;font-style:normal;color:#cbcbcb;font-family:'Liberation Sans';transform:scaleX(0.9016);">33.3%</div>
<div class="t" style="left:1002.84px;top:1074.00px;font-size:22px;font-weight:normal;font-style:normal;color:#cbcbcb;font-family:'Liberation Sans';transform:scaleX(1.1562);">Click to paint (try Shift for a straight line, Ctrl to pick a color)</div>
<div class="t" style="left:2014.70px;top:109.50px;font-size:21px;font-weight:normal;font-style:normal;color:#111;font-family:'Liberation Sans';transform:scaleX(1.0885);">Aa</div>
<div class="t" style="left:1913.15px;top:163.00px;font-size:22px;font-weight:normal;font-style:italic;color:#cfcfcf;font-family:'Liberation Sans';transform:scaleX(1.2463);">filter</div>
<div class="t" style="left:1903.60px;top:196.00px;font-size:21px;font-weight:normal;font-style:italic;color:#cfcfcf;font-family:'Liberation Sans';transform:scaleX(1.1486);">2. Hardness 050 (51 × 51)</div>
<div class="t" style="left:1909.66px;top:483.00px;font-size:22px;font-weight:normal;font-style:normal;color:#cbcbcb;font-family:'Liberation Sans';transform:scaleX(1.0679);">Basic,</div>
<div class="t" style="left:1905.23px;top:535.00px;font-size:22px;font-weight:normal;font-style:normal;color:#cbcbcb;font-family:'Liberation Sans';transform:scaleX(1.0740);">Spacing</div>
<div class="t" style="left:2257.67px;top:535.00px;font-size:22px;font-weight:normal;font-style:normal;color:#cbcbcb;font-family:'Liberation Sans';transform:scaleX(1.1150);">10.0</div>
<div class="t" style="left:1941.23px;top:662.00px;font-size:22px;font-weight:normal;font-style:normal;color:#cbcbcb;font-family:'Liberation Sans';transform:scaleX(1.0365);">Layers</div>
<div class="t" style="left:2061.95px;top:663.00px;font-size:22px;font-weight:normal;font-style:normal;color:#cbcbcb;font-family:'Liberation Sans';transform:scaleX(1.0516);">Channels</div>
<div class="t" style="left:2212.19px;top:663.00px;font-size:22px;font-weight:normal;font-style:normal;color:#cbcbcb;font-family:'Liberation Sans';transform:scaleX(1.0074);">Paths</div>
<div class="t" style="left:1916.58px;top:718.00px;font-size:22px;font-weight:normal;font-style:normal;color:#cbcbcb;font-family:'Liberation Sans';transform:scaleX(1.0577);">Mode</div>
<div class="t" style="left:2096.49px;top:718.00px;font-size:22px;font-weight:normal;font-style:normal;color:#cbcbcb;font-family:'Liberation Sans';transform:scaleX(1.1029);">Normal</div>
<div class="t" style="left:1906.42px;top:780.00px;font-size:22px;font-weight:normal;font-style:normal;color:#cbcbcb;font-family:'Liberation Sans';transform:scaleX(1.0788);">Opacity</div>
<div class="t" style="left:2245.34px;top:780.00px;font-size:22px;font-weight:normal;font-style:normal;color:#cbcbcb;font-family:'Liberation Sans';transform:scaleX(1.0817);">100.0</div>
<div class="t" style="left:1901.71px;top:843.00px;font-size:22px;font-weight:normal;font-style:normal;color:#cbcbcb;font-family:'Liberation Sans';transform:scaleX(1.0204);">Lock:</div>
<div class="t" style="left:2157.74px;top:901.00px;font-size:22px;font-weight:bold;font-style:normal;color:#e0e0e0;font-family:'Liberation Sans';transform:scaleX(1.0119);">Background</div>
</body></html>
